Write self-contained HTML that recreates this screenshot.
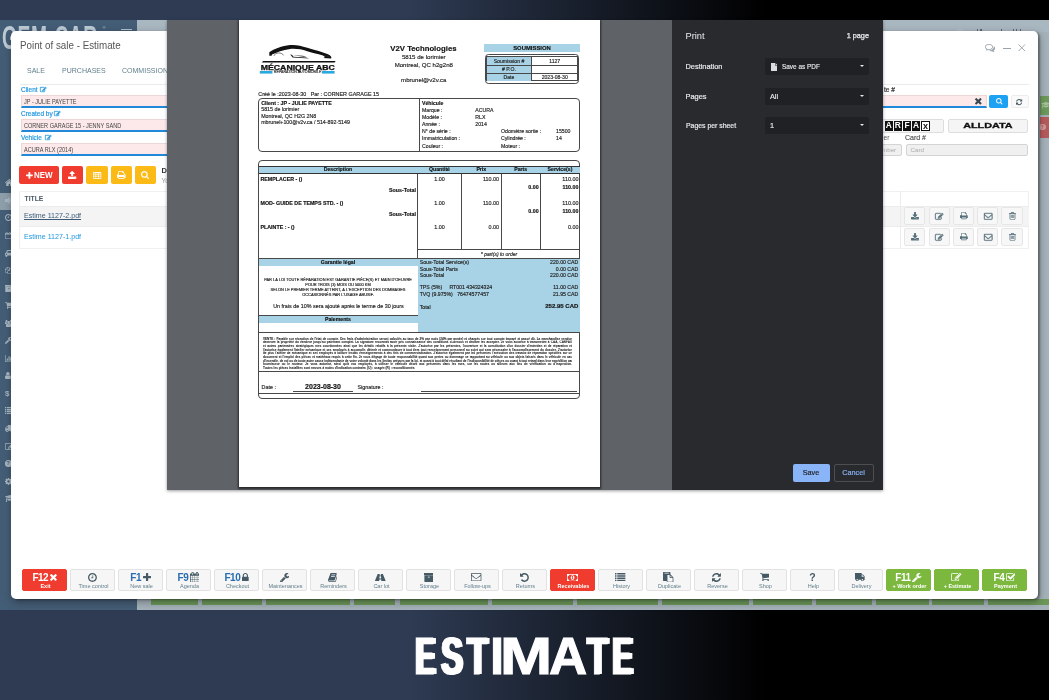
<!DOCTYPE html>
<html><head><meta charset="utf-8"><title>Estimate</title>
<style>
*{box-sizing:border-box;margin:0;padding:0}
html,body{width:1049px;height:700px;overflow:hidden}
body{font-family:"Liberation Sans",sans-serif;background:linear-gradient(90deg,#2e3b53 0,#2e3b53 39%,#000 73%);position:relative;color:#333}
.abs{position:absolute}
.sx{display:inline-block;transform-origin:0 50%;white-space:nowrap}
#app{left:0;top:20px;width:1049px;height:590px;background:#a5b2ba;overflow:hidden;will-change:transform}
#side{left:0;top:0;width:137px;height:590px;background:#445d76}
#modal{left:11px;top:31px;width:1027px;height:568px;background:#fff;border-radius:5px;overflow:hidden;box-shadow:2px 1px 2px rgba(0,0,0,.3),1px 3px 9px rgba(0,0,0,.35);will-change:transform}
#print{left:167px;top:20px;width:716px;height:470px;background:#5f6368;overflow:hidden;will-change:transform;box-shadow:0 1px 3px rgba(0,0,0,.4)}
#ppanel{left:505px;top:0;width:211px;height:470px;background:#292a2d;color:#e8eaed;font-size:7.6px}
#ppanel div{white-space:nowrap}
#page{left:72px;top:0;width:361px;height:467px;background:#fff;box-shadow:0 1px 2px 1px rgba(0,0,0,.6);overflow:hidden}
#title{left:0;top:623px;width:1049px;text-align:center;color:#fff;font-weight:bold;font-size:56px;line-height:64px}
#title{text-align:left;will-change:transform;height:70px}
.tl{position:absolute;transform-origin:0 0;-webkit-text-stroke:1px #fff;color:#fff;font-weight:bold}
.mt{left:8.5px;top:8px;font-size:10.6px;color:#555;white-space:nowrap}
.tab{top:35px;font-size:7.8px;color:#607d8b;white-space:nowrap}
.hl{height:1px;background:#ebebeb}
.lbl{font-size:7.2px;color:#1e96e0;white-space:nowrap;line-height:8px;-webkit-text-stroke:.2px #1e96e0}
.pin{height:12.8px;background:#fde9e9;border:1px solid #ecd6d6;border-bottom:2px solid #2089d9;font-size:6.4px;line-height:11px;color:#444;padding-left:2.8px;white-space:nowrap;overflow:hidden}
.btn{top:135px;height:18.2px;border-radius:2px;color:#fff}
.red{background:#f03c2e}.yel{background:#fbba16}
.gin{height:12.6px;background:#f0f0f0;border:1px solid #d4d4d4;border-radius:2px;font-size:6.2px;line-height:10px;color:#aaa;padding-left:4px}
.lb{height:13.5px;background:#f5f5f5;border:1px solid #ddd;border-radius:2px}
.dl{font-size:6.6px;color:#333;white-space:nowrap;line-height:8px;-webkit-text-stroke:.2px #333}
.row{left:8.5px;width:1009px;height:21.3px}
.ab{width:21.3px;height:18px;background:#f7f7f7;border:1px solid #e6e6e6;border-radius:2px}
.sel{left:93px;width:104px;height:17px;background:#202124;border-radius:2px;line-height:18px;padding-left:5px;font-size:7.3px;color:#e8eaed;-webkit-text-stroke:.15px #e8eaed}
.sel:after{content:"";position:absolute;right:5.2px;top:7px;border:2.6px solid transparent;border-top:2.8px solid #e8eaed;border-bottom:0}
.pl{left:13.5px;line-height:10px;font-size:7.4px;-webkit-text-stroke:.2px #e8eaed}
.bb{top:538.2px;width:45px;height:21.6px;background:#f6f6f6;border:1px solid #e2e2e2;border-radius:2px;overflow:hidden}
.bb .t{position:absolute;left:-5px;width:55px;text-align:center;top:12.7px;font-size:5.5px;line-height:6px;color:#607d8b;white-space:nowrap}
.bb .f{position:absolute;top:1.6px;font-size:9.6px;line-height:11px;font-weight:bold;color:#2a6db0;white-space:nowrap}
.bb.r{background:#f03c2e;border-color:#f03c2e}.bb.g{background:#7cb83e;border-color:#7cb83e}
.bb.r .t,.bb.g .t{color:#fff;font-weight:bold}.bb.r .f,.bb.g .f{color:#fff}
#page div{-webkit-text-stroke:.15px currentColor}

</style></head><body>
<div id="app" class="abs"><div id="side" class="abs"></div><div class="abs" style="left:2.3px;top:-1.8px;font-size:34px;line-height:38px;font-weight:bold;color:#bccad4;white-space:nowrap;letter-spacing:1px"><span class="sx" style="transform:scaleX(.565)">GEM-CAR</span></div><div class="abs" style="left:102.5px;top:4.5px;font-size:4px;line-height:5px;color:#bccad4">®</div><div class="abs" style="left:120.5px;top:8.6px;width:11px;height:1.4px;background:#b3c2cd"></div><div class="abs" style="left:137px;top:0;width:912px;height:12px;background:#a9b7c0"></div><div class="abs" style="left:0;top:173px;width:137px;height:16.5px;background:#8d9eab"></div><svg class="abs" style="left:4.50px;top:159.30px;width:8.79px;height:7.00px" viewBox="26 -1283 1612 1283" preserveAspectRatio="none" overflow="visible"><path transform="scale(1 -1)" fill="#a9b9c5" d="M1408 544C1408 546 1408 548 1407 550L832 1024L257 550C257 548 256 546 256 544V64C256 29 285 0 320 0H704V384H960V0H1344C1379 0 1408 29 1408 64ZM1631 613C1642 626 1640 647 1627 658L1408 840V1248C1408 1266 1394 1280 1376 1280H1184C1166 1280 1152 1266 1152 1248V1053L908 1257C866 1292 798 1292 756 1257L37 658C24 647 22 626 33 613L95 539C100 533 108 529 116 528C125 527 133 530 140 535L832 1112L1524 535C1530 530 1537 528 1545 528C1546 528 1547 528 1548 528C1556 529 1564 533 1569 539L1631 613Z"/></svg><svg class="abs" style="left:4.50px;top:176.85px;width:8.40px;height:7.00px" viewBox="0 -1280 1536 1280" preserveAspectRatio="none" overflow="visible"><path transform="scale(1 -1)" fill="#a9b9c5" d="M1184 640C1184 657 1177 673 1165 685L621 1229C609 1241 593 1248 576 1248C541 1248 512 1219 512 1184V896H64C29 896 0 867 0 832V448C0 413 29 384 64 384H512V96C512 61 541 32 576 32C593 32 609 39 621 51L1165 595C1177 607 1184 623 1184 640ZM1536 992C1536 1151 1407 1280 1248 1280H928C883 1280 896 1212 896 1184C896 1147 935 1152 960 1152H1248C1336 1152 1408 1080 1408 992V288C1408 200 1336 128 1248 128H928C883 128 896 60 896 32C896 15 911 0 928 0H1248C1407 0 1536 129 1536 288Z"/></svg><svg class="abs" style="left:4.50px;top:194.40px;width:7.00px;height:7.00px" viewBox="0 -1408 1536 1536" preserveAspectRatio="none" overflow="visible"><path transform="scale(1 -1)" fill="#a9b9c5" d="M896 992C896 1010 882 1024 864 1024H800C782 1024 768 1010 768 992V640H544C526 640 512 626 512 608V544C512 526 526 512 544 512H864C882 512 896 526 896 544ZM1312 640C1312 340 1068 96 768 96C468 96 224 340 224 640C224 940 468 1184 768 1184C1068 1184 1312 940 1312 640ZM1536 640C1536 1064 1192 1408 768 1408C344 1408 0 1064 0 640C0 216 344 -128 768 -128C1192 -128 1536 216 1536 640Z"/></svg><svg class="abs" style="left:4.50px;top:211.95px;width:6.50px;height:7.00px" viewBox="0 -1536 1664 1792" preserveAspectRatio="none" overflow="visible"><path transform="scale(1 -1)" fill="#a9b9c5" d="M128 -128V896H1536V-128ZM512 1088C512 1070 498 1056 480 1056H416C398 1056 384 1070 384 1088V1376C384 1394 398 1408 416 1408H480C498 1408 512 1394 512 1376V1088ZM1280 1088C1280 1070 1266 1056 1248 1056H1184C1166 1056 1152 1070 1152 1088V1376C1152 1394 1166 1408 1184 1408H1248C1266 1408 1280 1394 1280 1376V1088ZM1664 1152C1664 1222 1606 1280 1536 1280H1408V1376C1408 1464 1336 1536 1248 1536H1184C1096 1536 1024 1464 1024 1376V1280H640V1376C640 1464 568 1536 480 1536H416C328 1536 256 1464 256 1376V1280H128C58 1280 0 1222 0 1152V-128C0 -198 58 -256 128 -256H1536C1606 -256 1664 -198 1664 -128Z"/></svg><svg class="abs" style="left:4.50px;top:229.50px;width:8.96px;height:7.00px" viewBox="0 -1408 2048 1600" preserveAspectRatio="none" overflow="visible"><path transform="scale(1 -1)" fill="#a9b9c5" d="M480 448C480 360 408 288 320 288C232 288 160 360 160 448C160 536 232 608 320 608C408 608 480 536 480 448ZM516 768 605 1125C608 1136 628 1152 640 1152H1408C1420 1152 1440 1136 1443 1125L1532 768ZM1888 448C1888 360 1816 288 1728 288C1640 288 1568 360 1568 448C1568 536 1640 608 1728 608C1816 608 1888 536 1888 448ZM2048 544C2048 668 1948 768 1824 768H1796L1691 1187C1660 1313 1538 1408 1408 1408H640C510 1408 388 1313 357 1187L252 768H224C100 768 0 668 0 544V160C0 142 14 128 32 128H128V0C128 -106 214 -192 320 -192C426 -192 512 -106 512 0V128H1536V0C1536 -106 1622 -192 1728 -192C1834 -192 1920 -106 1920 0V128H2016C2034 128 2048 142 2048 160Z"/></svg><svg class="abs" style="left:4.50px;top:247.05px;width:7.00px;height:7.00px" viewBox="0 -1536 1792 1792" preserveAspectRatio="none" overflow="visible"><path transform="scale(1 -1)" fill="#a9b9c5" d="M1696 1152H1280C1241 1152 1191 1135 1152 1112V1440C1152 1493 1109 1536 1056 1536H640C587 1536 513 1505 476 1468L68 1060C31 1023 0 949 0 896V224C0 171 43 128 96 128H640V-160C640 -213 683 -256 736 -256H1696C1749 -256 1792 -213 1792 -160V1056C1792 1109 1749 1152 1696 1152ZM1152 939V640H853ZM512 1323V1024H213ZM708 676C671 639 640 565 640 512V256H128V896H544C597 896 640 939 640 992V1408H1024V992ZM1664 -128H768V512H1184C1237 512 1280 555 1280 608V1024H1664Z"/></svg><svg class="abs" style="left:4.50px;top:264.60px;width:7.58px;height:7.00px" viewBox="64 -1408 1664 1536" preserveAspectRatio="none" overflow="visible"><path transform="scale(1 -1)" fill="#a9b9c5" d="M1088 704C1088 669 1059 640 1024 640H768C733 640 704 669 704 704C704 739 733 768 768 768H1024C1059 768 1088 739 1088 704ZM1664 896C1664 931 1635 960 1600 960H192C157 960 128 931 128 896V-64C128 -99 157 -128 192 -128H1600C1635 -128 1664 -99 1664 -64ZM1728 1344C1728 1379 1699 1408 1664 1408H128C93 1408 64 1379 64 1344V1088C64 1053 93 1024 128 1024H1664C1699 1024 1728 1053 1728 1088Z"/></svg><svg class="abs" style="left:4.50px;top:282.15px;width:8.27px;height:7.00px" viewBox="0 -1280 1664 1408" preserveAspectRatio="none" overflow="visible"><path transform="scale(1 -1)" fill="#a9b9c5" d="M640 0C640 70 582 128 512 128C442 128 384 70 384 0C384 -70 442 -128 512 -128C582 -128 640 -70 640 0ZM1536 0C1536 70 1478 128 1408 128C1338 128 1280 70 1280 0C1280 -70 1338 -128 1408 -128C1478 -128 1536 -70 1536 0ZM1664 1088C1664 1123 1635 1152 1600 1152H399C389 1200 387 1280 320 1280H64C29 1280 0 1251 0 1216C0 1181 29 1152 64 1152H268L445 329C429 298 384 223 384 192C384 157 413 128 448 128H1472C1507 128 1536 157 1536 192C1536 227 1507 256 1472 256H552C562 276 576 297 576 320C576 344 568 367 563 390L1607 512C1639 516 1664 544 1664 576Z"/></svg><svg class="abs" style="left:4.50px;top:299.70px;width:7.50px;height:7.00px" viewBox="-0 -1536 1920 1792" preserveAspectRatio="none" overflow="visible"><path transform="scale(1 -1)" fill="#a9b9c5" d="M593 640C541 715 512 805 512 896C512 918 514 940 517 962C474 947 430 939 384 939C249 939 145 1024 124 1024C-3 1024 0 752 0 671C0 560 94 512 194 512H328C395 592 489 637 593 640ZM1664 3C1664 229 1611 576 1318 576C1284 576 1160 437 960 437C760 437 636 576 602 576C309 576 256 229 256 3C256 -159 363 -256 523 -256H1397C1557 -256 1664 -159 1664 3ZM640 1280C640 1421 525 1536 384 1536C243 1536 128 1421 128 1280C128 1139 243 1024 384 1024C525 1024 640 1139 640 1280ZM1344 896C1344 1108 1172 1280 960 1280C748 1280 576 1108 576 896C576 684 748 512 960 512C1172 512 1344 684 1344 896ZM1920 671C1920 752 1923 1024 1796 1024C1775 1024 1671 939 1536 939C1490 939 1446 947 1403 962C1406 940 1408 918 1408 896C1408 805 1379 715 1327 640C1431 637 1525 592 1592 512H1726C1826 512 1920 560 1920 671ZM1792 1280C1792 1421 1677 1536 1536 1536C1395 1536 1280 1421 1280 1280C1280 1139 1395 1024 1536 1024C1677 1024 1792 1139 1792 1280Z"/></svg><svg class="abs" style="left:4.50px;top:317.25px;width:6.99px;height:7.00px" viewBox="21 -1408 1641 1643" preserveAspectRatio="none" overflow="visible"><path transform="scale(1 -1)" fill="#a9b9c5" d="M384 64C384 29 355 0 320 0C285 0 256 29 256 64C256 99 285 128 320 128C355 128 384 99 384 64ZM1028 484C897 536 792 641 740 772L59 91C35 67 21 34 21 0C21 -34 35 -67 59 -90L165 -198C189 -221 222 -235 256 -235C290 -235 323 -221 346 -198L1028 484ZM1662 919C1662 939 1650 954 1630 954C1610 954 1378 808 1345 789L1152 896V1120L1445 1289C1454 1295 1461 1306 1461 1317C1461 1329 1455 1338 1445 1345C1384 1386 1289 1408 1216 1408C969 1408 768 1207 768 960C768 713 969 512 1216 512C1405 512 1576 635 1639 813C1650 845 1662 886 1662 919Z"/></svg><svg class="abs" style="left:4.50px;top:334.80px;width:9.33px;height:7.00px" viewBox="0 -1408 2048 1536" preserveAspectRatio="none" overflow="visible"><path transform="scale(1 -1)" fill="#a9b9c5" d="M640 640H384V128H640ZM1024 1152H768V128H1024ZM2048 0H128V1408H0V-128H2048ZM1408 896H1152V128H1408ZM1792 1280H1536V128H1792Z"/></svg><svg class="abs" style="left:4.50px;top:352.35px;width:5.83px;height:7.00px" viewBox="0 -1408 1280 1536" preserveAspectRatio="none" overflow="visible"><path transform="scale(1 -1)" fill="#a9b9c5" d="M1280 137C1280 400 1215 704 953 704C872 625 762 576 640 576C518 576 408 625 327 704C65 704 0 400 0 137C0 -9 96 -128 213 -128H1067C1184 -128 1280 -9 1280 137ZM1024 1024C1024 1236 852 1408 640 1408C428 1408 256 1236 256 1024C256 812 428 640 640 640C852 640 1024 812 1024 1024Z"/></svg><div class="abs" style="left:5px;top:368.9px;font-size:8px;line-height:9px;font-weight:bold;color:#a9b9c5">$</div><svg class="abs" style="left:4.50px;top:387.45px;width:8.91px;height:7.00px" viewBox="0 -1408 1792 1408" preserveAspectRatio="none" overflow="visible"><path transform="scale(1 -1)" fill="#a9b9c5" d="M256 224C256 241 241 256 224 256H32C15 256 0 241 0 224V32C0 15 15 0 32 0H224C241 0 256 15 256 32ZM256 608C256 625 241 640 224 640H32C15 640 0 625 0 608V416C0 399 15 384 32 384H224C241 384 256 399 256 416ZM256 992C256 1009 241 1024 224 1024H32C15 1024 0 1009 0 992V800C0 783 15 768 32 768H224C241 768 256 783 256 800ZM1792 224C1792 241 1777 256 1760 256H416C399 256 384 241 384 224V32C384 15 399 0 416 0H1760C1777 0 1792 15 1792 32ZM256 1376C256 1393 241 1408 224 1408H32C15 1408 0 1393 0 1376V1184C0 1167 15 1152 32 1152H224C241 1152 256 1167 256 1184ZM1792 608C1792 625 1777 640 1760 640H416C399 640 384 625 384 608V416C384 399 399 384 416 384H1760C1777 384 1792 399 1792 416ZM1792 992C1792 1009 1777 1024 1760 1024H416C399 1024 384 1009 384 992V800C384 783 399 768 416 768H1760C1777 768 1792 783 1792 800ZM1792 1376C1792 1393 1777 1408 1760 1408H416C399 1408 384 1393 384 1376V1184C384 1167 399 1152 416 1152H1760C1777 1152 1792 1167 1792 1184Z"/></svg><svg class="abs" style="left:4.50px;top:405.00px;width:8.59px;height:7.00px" viewBox="64 -1280 1728 1408" preserveAspectRatio="none" overflow="visible"><path transform="scale(1 -1)" fill="#a9b9c5" d="M640 128C640 58 582 0 512 0C442 0 384 58 384 128C384 198 442 256 512 256C582 256 640 198 640 128ZM256 640V670C256 674 262 689 265 692L460 887C463 890 478 896 482 896H640V640ZM1536 128C1536 58 1478 0 1408 0C1338 0 1280 58 1280 128C1280 198 1338 256 1408 256C1478 256 1536 198 1536 128ZM1792 1216C1792 1251 1763 1280 1728 1280H704C669 1280 640 1251 640 1216V1024H480C444 1024 396 1004 371 979L173 781C118 726 128 647 128 576V256C93 256 64 227 64 192C64 118 142 128 192 128H256C256 -13 371 -128 512 -128C653 -128 768 -13 768 128H1152C1152 -13 1267 -128 1408 -128C1549 -128 1664 -13 1664 128C1714 128 1792 118 1792 192Z"/></svg><svg class="abs" style="left:4.50px;top:422.55px;width:8.87px;height:7.00px" viewBox="0 -1408 1784 1408" preserveAspectRatio="none" overflow="visible"><path transform="scale(1 -1)" fill="#a9b9c5" d="M888 352H832V448H736V504L852 620L1004 468ZM1328 1072C1337 1063 1336 1048 1327 1039L977 689C968 680 953 679 944 688C935 697 936 712 945 721L1295 1071C1304 1080 1319 1081 1328 1072ZM1408 478C1408 491 1400 502 1388 507C1376 512 1363 510 1353 500L1289 436C1283 430 1280 422 1280 414V288C1280 200 1208 128 1120 128H288C200 128 128 200 128 288V1120C128 1208 200 1280 288 1280H1120C1135 1280 1150 1278 1165 1274C1176 1270 1188 1273 1197 1282L1246 1331C1254 1339 1257 1349 1255 1360C1253 1370 1246 1379 1237 1383C1200 1400 1160 1408 1120 1408H288C129 1408 0 1279 0 1120V288C0 129 129 0 288 0H1120C1279 0 1408 129 1408 288ZM1312 1216 640 544V256H928L1600 928ZM1756 1084C1793 1121 1793 1183 1756 1220L1604 1372C1567 1409 1505 1409 1468 1372L1376 1280L1664 992L1756 1084Z"/></svg><div class="abs" style="left:4.5px;top:440.1px;width:7px;height:7px;border-radius:50%;background:#a9b9c5;color:#445d76;font-size:6px;line-height:7px;font-weight:bold;text-align:center">?</div><svg class="abs" style="left:4.50px;top:457.65px;width:7.00px;height:7.00px" viewBox="0 -1408 1536 1536" preserveAspectRatio="none" overflow="visible"><path transform="scale(1 -1)" fill="#a9b9c5" d="M1024 640C1024 499 909 384 768 384C627 384 512 499 512 640C512 781 627 896 768 896C909 896 1024 781 1024 640ZM1536 749C1536 766 1524 782 1507 785L1324 813C1314 846 1300 879 1283 911C1317 958 1354 1002 1388 1048C1393 1055 1396 1062 1396 1071C1396 1079 1394 1087 1389 1093C1347 1152 1277 1214 1224 1263C1217 1269 1208 1273 1199 1273C1190 1273 1181 1270 1175 1264L1033 1157C1004 1172 974 1184 943 1194L915 1378C913 1395 897 1408 879 1408H657C639 1408 625 1396 621 1380C605 1320 599 1255 592 1194C561 1184 530 1171 501 1156L363 1263C355 1269 346 1273 337 1273C303 1273 168 1127 144 1094C139 1087 135 1080 135 1071C135 1062 139 1054 145 1047C182 1002 218 957 252 909C236 879 223 849 213 817L27 789C12 786 0 768 0 753V531C0 514 12 498 29 495L212 468C222 434 236 401 253 369C219 322 182 278 148 232C143 225 140 218 140 209C140 201 142 193 147 186C189 128 259 66 312 18C319 11 328 7 337 7C346 7 355 10 362 16L503 123C532 108 562 96 593 86L621 -98C623 -115 639 -128 657 -128H879C897 -128 911 -116 915 -100C931 -40 937 25 944 86C975 96 1006 109 1035 124L1173 16C1181 11 1190 7 1199 7C1233 7 1368 154 1392 186C1398 193 1401 200 1401 209C1401 218 1397 227 1391 234C1354 279 1318 323 1284 372C1300 401 1312 431 1323 463L1508 491C1524 494 1536 512 1536 527Z"/></svg><svg class="abs" style="left:4.50px;top:475.20px;width:10.50px;height:7.00px" viewBox="0 -1408 2304 1536" preserveAspectRatio="none" overflow="visible"><path transform="scale(1 -1)" fill="#a9b9c5" d="M1774 700 1200 519C1184 514 1168 512 1152 512C1136 512 1120 514 1104 519L530 700L512 384C504 243 799 128 1152 128C1505 128 1800 243 1792 384ZM2304 1024C2304 1038 2295 1050 2282 1055L1162 1407C1158 1408 1155 1408 1152 1408C1149 1408 1146 1408 1142 1407L22 1055C9 1050 0 1038 0 1024C0 1010 9 998 22 993L355 889C293 802 263 676 257 559C219 537 192 496 192 448C192 403 215 364 250 341L192 -92C191 -101 194 -110 200 -117C206 -124 215 -128 224 -128H416C425 -128 434 -124 440 -117C446 -110 449 -101 448 -92L390 341C425 364 448 403 448 448C448 495 423 535 385 557C393 692 433 802 490 847L1142 641C1146 640 1149 640 1152 640C1155 640 1158 640 1162 641L2282 993C2295 998 2304 1010 2304 1024Z"/></svg><div class="abs" style="left:150.6px;top:578.6px;width:47.7px;height:6.2px;background:#6c9759"></div><div class="abs" style="left:202px;top:578.6px;width:60.3px;height:6.2px;background:#6c9759"></div><div class="abs" style="left:265.8px;top:578.6px;width:83.9px;height:6.2px;background:#6c9759"></div><div class="abs" style="left:353.9px;top:578.6px;width:41.4px;height:6.2px;background:#6c9759"></div><div class="abs" style="left:399.9px;top:578.6px;width:88.1px;height:6.2px;background:#6c9759"></div><div class="abs" style="left:491.8px;top:578.6px;width:80.8px;height:6.2px;background:#6c9759"></div><div class="abs" style="left:576.5px;top:578.6px;width:81.5px;height:6.2px;background:#6c9759"></div><div class="abs" style="left:662px;top:578.6px;width:87.0px;height:6.2px;background:#6c9759"></div><div class="abs" style="left:752.7px;top:578.6px;width:59.3px;height:6.2px;background:#6c9759"></div><div class="abs" style="left:816px;top:578.6px;width:56.0px;height:6.2px;background:#6c9759"></div><div class="abs" style="left:876px;top:578.6px;width:52.5px;height:6.2px;background:#6c9759"></div><div class="abs" style="left:932.3px;top:578.6px;width:51.7px;height:6.2px;background:#6c9759"></div><div class="abs" style="left:987.6px;top:578.6px;width:61.4px;height:6.2px;background:#6c9759"></div><div class="abs" style="left:1040px;top:76px;width:9px;height:19.2px;background:#6d9a5b"></div><div class="abs" style="left:1040px;top:97px;width:9px;height:20.5px;background:#b65b5b"></div><div class="abs" style="left:976.8px;top:8.8px;width:1.4px;height:3px;background:#5a666e"></div><div class="abs" style="left:980.4px;top:8.8px;width:1.4px;height:3px;background:#5a666e"></div><div class="abs" style="left:1001px;top:8.8px;width:1.4px;height:3px;background:#5a666e"></div><div class="abs" style="left:1012.5px;top:8.8px;width:1.4px;height:3px;background:#5a666e"></div><div class="abs" style="left:1016px;top:8.8px;width:1px;height:3px;background:#5a666e"></div><div class="abs" style="left:1019.6px;top:8.8px;width:1.4px;height:3px;background:#5a666e"></div><div class="abs" style="left:956px;top:9px;width:8px;height:8px;border:1.3px solid #b9c5cc;border-radius:50%"></div><svg class="abs" style="left:1040.50px;top:81.50px;width:9.75px;height:6.50px" viewBox="0 -1408 2304 1536" preserveAspectRatio="none" overflow="visible"><path transform="scale(1 -1)" fill="#a9c29c" d="M1774 700 1200 519C1184 514 1168 512 1152 512C1136 512 1120 514 1104 519L530 700L512 384C504 243 799 128 1152 128C1505 128 1800 243 1792 384ZM2304 1024C2304 1038 2295 1050 2282 1055L1162 1407C1158 1408 1155 1408 1152 1408C1149 1408 1146 1408 1142 1407L22 1055C9 1050 0 1038 0 1024C0 1010 9 998 22 993L355 889C293 802 263 676 257 559C219 537 192 496 192 448C192 403 215 364 250 341L192 -92C191 -101 194 -110 200 -117C206 -124 215 -128 224 -128H416C425 -128 434 -124 440 -117C446 -110 449 -101 448 -92L390 341C425 364 448 403 448 448C448 495 423 535 385 557C393 692 433 802 490 847L1142 641C1146 640 1149 640 1152 640C1155 640 1158 640 1162 641L2282 993C2295 998 2304 1010 2304 1024Z"/></svg><div class="abs" style="left:1039px;top:103.5px;width:6.5px;height:6.5px;border-radius:50%;background:#d29c9c;color:#b65b5b;font-size:5.5px;line-height:6.5px;font-weight:bold;text-align:center">?</div></div>
<div id="modal" class="abs">
<div class="abs mt"><span class="sx" style="transform:scaleX(.925)">Point of sale - Estimate</span></div>
<div class="abs tab" style="left:15.8px"><span class="sx" style="transform:scaleX(.9)">SALE</span></div>
<div class="abs tab" style="left:51px"><span class="sx" style="transform:scaleX(.9)">PURCHASES</span></div>
<div class="abs tab" style="left:110.5px"><span class="sx" style="transform:scaleX(.9)">COMMISSIONS</span></div>
<div class="abs hl" style="left:8.5px;top:53px;width:1009px"></div>
<div class="abs lbl" style="left:10px;top:55px"><span class="sx" style="transform:scaleX(.9)">Client</span></div>
<div class="abs pin" style="left:9.5px;top:64.3px;width:966px"><span class="sx" style="transform:scaleX(.87)">JP - JULIE PAYETTE</span></div>
<div class="abs lbl" style="left:10px;top:79px"><span class="sx" style="transform:scaleX(.9)">Created by</span></div>
<div class="abs pin" style="left:9.5px;top:88.3px;width:700px"><span class="sx" style="transform:scaleX(.87)">CORNER GARAGE 15 - JENNY SAND</span></div>
<div class="abs lbl" style="left:10px;top:103px"><span class="sx" style="transform:scaleX(.9)">Vehicle</span></div>
<div class="abs pin" style="left:9.5px;top:112.3px;width:700px"><span class="sx" style="transform:scaleX(.87)">ACURA RLX (2014)</span></div>
<svg class="abs" style="left:28.80px;top:56.00px;width:6.46px;height:5.10px;overflow:visible" viewBox="0 -1408 1784 1408" preserveAspectRatio="none" overflow="visible"><path stroke="#1e96e0" stroke-width="70" transform="scale(1 -1)" fill="#1e96e0" d="M888 352H832V448H736V504L852 620L1004 468ZM1328 1072C1337 1063 1336 1048 1327 1039L977 689C968 680 953 679 944 688C935 697 936 712 945 721L1295 1071C1304 1080 1319 1081 1328 1072ZM1408 478C1408 491 1400 502 1388 507C1376 512 1363 510 1353 500L1289 436C1283 430 1280 422 1280 414V288C1280 200 1208 128 1120 128H288C200 128 128 200 128 288V1120C128 1208 200 1280 288 1280H1120C1135 1280 1150 1278 1165 1274C1176 1270 1188 1273 1197 1282L1246 1331C1254 1339 1257 1349 1255 1360C1253 1370 1246 1379 1237 1383C1200 1400 1160 1408 1120 1408H288C129 1408 0 1279 0 1120V288C0 129 129 0 288 0H1120C1279 0 1408 129 1408 288ZM1312 1216 640 544V256H928L1600 928ZM1756 1084C1793 1121 1793 1183 1756 1220L1604 1372C1567 1409 1505 1409 1468 1372L1376 1280L1664 992L1756 1084Z"/></svg><svg class="abs" style="left:43.20px;top:80.00px;width:6.46px;height:5.10px;overflow:visible" viewBox="0 -1408 1784 1408" preserveAspectRatio="none" overflow="visible"><path stroke="#1e96e0" stroke-width="70" transform="scale(1 -1)" fill="#1e96e0" d="M888 352H832V448H736V504L852 620L1004 468ZM1328 1072C1337 1063 1336 1048 1327 1039L977 689C968 680 953 679 944 688C935 697 936 712 945 721L1295 1071C1304 1080 1319 1081 1328 1072ZM1408 478C1408 491 1400 502 1388 507C1376 512 1363 510 1353 500L1289 436C1283 430 1280 422 1280 414V288C1280 200 1208 128 1120 128H288C200 128 128 200 128 288V1120C128 1208 200 1280 288 1280H1120C1135 1280 1150 1278 1165 1274C1176 1270 1188 1273 1197 1282L1246 1331C1254 1339 1257 1349 1255 1360C1253 1370 1246 1379 1237 1383C1200 1400 1160 1408 1120 1408H288C129 1408 0 1279 0 1120V288C0 129 129 0 288 0H1120C1279 0 1408 129 1408 288ZM1312 1216 640 544V256H928L1600 928ZM1756 1084C1793 1121 1793 1183 1756 1220L1604 1372C1567 1409 1505 1409 1468 1372L1376 1280L1664 992L1756 1084Z"/></svg><svg class="abs" style="left:33.80px;top:104.00px;width:6.46px;height:5.10px;overflow:visible" viewBox="0 -1408 1784 1408" preserveAspectRatio="none" overflow="visible"><path stroke="#1e96e0" stroke-width="70" transform="scale(1 -1)" fill="#1e96e0" d="M888 352H832V448H736V504L852 620L1004 468ZM1328 1072C1337 1063 1336 1048 1327 1039L977 689C968 680 953 679 944 688C935 697 936 712 945 721L1295 1071C1304 1080 1319 1081 1328 1072ZM1408 478C1408 491 1400 502 1388 507C1376 512 1363 510 1353 500L1289 436C1283 430 1280 422 1280 414V288C1280 200 1208 128 1120 128H288C200 128 128 200 128 288V1120C128 1208 200 1280 288 1280H1120C1135 1280 1150 1278 1165 1274C1176 1270 1188 1273 1197 1282L1246 1331C1254 1339 1257 1349 1255 1360C1253 1370 1246 1379 1237 1383C1200 1400 1160 1408 1120 1408H288C129 1408 0 1279 0 1120V288C0 129 129 0 288 0H1120C1279 0 1408 129 1408 288ZM1312 1216 640 544V256H928L1600 928ZM1756 1084C1793 1121 1793 1183 1756 1220L1604 1372C1567 1409 1505 1409 1468 1372L1376 1280L1664 992L1756 1084Z"/></svg>
<div class="abs btn red" style="left:8.4px;width:39.3px"><div class="abs" style="left:14.5px;top:4.3px;font-size:8.6px;line-height:10px;font-weight:bold;color:#fff"><span class="sx" style="transform:scaleX(.93)">NEW</span></div></div>
<div class="abs btn red" style="left:51px;width:21px"></div>
<div class="abs btn yel" style="left:75px;width:21.5px"></div>
<div class="abs btn yel" style="left:99.5px;width:21px"></div>
<div class="abs btn yel" style="left:123.5px;width:21px"></div>
<svg class="abs" style="left:14.60px;top:140.80px;width:6.80px;height:6.80px" viewBox="0 -1408 1408 1408" preserveAspectRatio="none" overflow="visible"><path transform="scale(1 -1)" fill="#fff" d="M1408 800C1408 853 1365 896 1312 896H896V1312C896 1365 853 1408 800 1408H608C555 1408 512 1365 512 1312V896H96C43 896 0 853 0 800V608C0 555 43 512 96 512H512V96C512 43 555 0 608 0H800C853 0 896 43 896 96V512H1312C1365 512 1408 555 1408 608Z"/></svg><svg class="abs" style="left:57.40px;top:140.20px;width:8.32px;height:8.00px" viewBox="0 -1472 1664 1600" preserveAspectRatio="none" overflow="visible"><path transform="scale(1 -1)" fill="#fff" d="M1280 64C1280 29 1251 0 1216 0C1181 0 1152 29 1152 64C1152 99 1181 128 1216 128C1251 128 1280 99 1280 64ZM1536 64C1536 29 1507 0 1472 0C1437 0 1408 29 1408 64C1408 99 1437 128 1472 128C1507 128 1536 99 1536 64ZM1664 288C1664 341 1621 384 1568 384H1141C1114 310 1043 256 960 256H704C621 256 550 310 523 384H96C43 384 0 341 0 288V-32C0 -85 43 -128 96 -128H1568C1621 -128 1664 -85 1664 -32ZM1339 936C1349 959 1344 987 1325 1005L877 1453C865 1466 848 1472 832 1472C816 1472 799 1466 787 1453L339 1005C320 987 315 959 325 936C335 912 358 896 384 896H640V448C640 413 669 384 704 384H960C995 384 1024 413 1024 448V896H1280C1306 896 1329 912 1339 936Z"/></svg><svg class="abs" style="left:81.60px;top:140.80px;width:8.27px;height:7.00px" viewBox="0 -1408 1664 1408" preserveAspectRatio="none" overflow="visible"><path transform="scale(1 -1)" fill="#fff" d="M512 160C512 142 498 128 480 128H160C142 128 128 142 128 160V352C128 370 142 384 160 384H480C498 384 512 370 512 352V160ZM512 544C512 526 498 512 480 512H160C142 512 128 526 128 544V736C128 754 142 768 160 768H480C498 768 512 754 512 736V544ZM1024 160C1024 142 1010 128 992 128H672C654 128 640 142 640 160V352C640 370 654 384 672 384H992C1010 384 1024 370 1024 352V160ZM512 928C512 910 498 896 480 896H160C142 896 128 910 128 928V1120C128 1138 142 1152 160 1152H480C498 1152 512 1138 512 1120V928ZM1024 544C1024 526 1010 512 992 512H672C654 512 640 526 640 544V736C640 754 654 768 672 768H992C1010 768 1024 754 1024 736V544ZM1536 160C1536 142 1522 128 1504 128H1184C1166 128 1152 142 1152 160V352C1152 370 1166 384 1184 384H1504C1522 384 1536 370 1536 352V160ZM1024 928C1024 910 1010 896 992 896H672C654 896 640 910 640 928V1120C640 1138 654 1152 672 1152H992C1010 1152 1024 1138 1024 1120V928ZM1536 544C1536 526 1522 512 1504 512H1184C1166 512 1152 526 1152 544V736C1152 754 1166 768 1184 768H1504C1522 768 1536 754 1536 736V544ZM1536 928C1536 910 1522 896 1504 896H1184C1166 896 1152 910 1152 928V1120C1152 1138 1166 1152 1184 1152H1504C1522 1152 1536 1138 1536 1120V928ZM1664 1248C1664 1336 1592 1408 1504 1408H160C72 1408 0 1336 0 1248V160C0 72 72 0 160 0H1504C1592 0 1664 72 1664 160Z"/></svg><svg class="abs" style="left:105.70px;top:140.20px;width:8.67px;height:8.00px" viewBox="0 -1408 1664 1536" preserveAspectRatio="none" overflow="visible"><path transform="scale(1 -1)" fill="#fff" d="M384 0V256H1280V0ZM384 640V1280H1024V1120C1024 1067 1067 1024 1120 1024H1280V640ZM1536 576C1536 541 1507 512 1472 512C1437 512 1408 541 1408 576C1408 611 1437 640 1472 640C1507 640 1536 611 1536 576ZM1664 576C1664 681 1577 768 1472 768H1408V1024C1408 1077 1378 1150 1340 1188L1188 1340C1150 1378 1077 1408 1024 1408H352C299 1408 256 1365 256 1312V768H192C87 768 0 681 0 576V160C0 143 15 128 32 128H256V-32C256 -85 299 -128 352 -128H1312C1365 -128 1408 -85 1408 -32V128H1632C1649 128 1664 143 1664 160Z"/></svg><svg class="abs" style="left:130.00px;top:140.20px;width:8.00px;height:8.00px" viewBox="0 -1408 1664 1664" preserveAspectRatio="none" overflow="visible"><path transform="scale(1 -1)" fill="#fff" d="M1152 704C1152 457 951 256 704 256C457 256 256 457 256 704C256 951 457 1152 704 1152C951 1152 1152 951 1152 704ZM1664 -128C1664 -94 1650 -61 1627 -38L1284 305C1365 422 1408 562 1408 704C1408 1093 1093 1408 704 1408C315 1408 0 1093 0 704C0 315 315 0 704 0C846 0 986 43 1103 124L1446 -218C1469 -242 1502 -256 1536 -256C1606 -256 1664 -198 1664 -128Z"/></svg>
<div class="abs" style="left:150.5px;top:135.2px;font-size:7.5px;font-weight:bold;color:#333;line-height:9px">Documents</div>
<div class="abs" style="left:150.5px;top:145.6px;font-size:6.5px;color:#999;line-height:8px">You can</div>
<!-- top-right window controls -->
<svg class="abs" style="left:974.00px;top:13.20px;width:10.18px;height:8.00px" viewBox="0 -1280 1792 1408" preserveAspectRatio="none" overflow="visible"><path transform="scale(1 -1)" fill="#9aa4aa" d="M704 1152C1016 1152 1280 976 1280 768C1280 560 1016 384 704 384C652 384 601 389 551 398L498 408L454 377C434 363 413 350 392 338L427 422L330 478C202 552 128 658 128 768C128 976 392 1152 704 1152ZM704 1280C315 1280 0 1051 0 768C0 606 104 461 266 367C232 284 188 245 149 201C138 188 125 176 129 157C129 157 129 157 129 157C132 140 146 128 161 128C162 128 163 128 164 128C194 132 223 137 250 144C351 170 445 213 528 272C584 262 643 256 704 256C1093 256 1408 485 1408 768C1408 1051 1093 1280 704 1280ZM1526 111C1688 205 1792 349 1792 512C1792 679 1682 827 1513 920C1528 871 1536 820 1536 768C1536 589 1444 424 1277 302C1122 190 919 128 704 128C675 128 645 130 616 132C741 50 907 0 1088 0C1149 0 1208 6 1264 16C1347 -43 1441 -86 1542 -112C1569 -119 1598 -124 1628 -128C1644 -130 1659 -117 1663 -99C1663 -99 1663 -99 1663 -99C1667 -80 1654 -68 1643 -55C1604 -11 1560 28 1526 111Z"/></svg>
<div class="abs" style="left:991.5px;top:16.8px;width:8px;height:1px;background:#99a2a8"></div>
<svg class="abs" style="left:1007.3px;top:13.3px;width:7.6px;height:7.6px" viewBox="0 0 10 10"><path d="M.7 .7L9.3 9.3M9.3 .7L.7 9.3" stroke="#99a2a8" stroke-width="1.2" fill="none"/></svg>
<!-- right side -->
<div class="abs dl" style="left:873px;top:55px">te #</div>
<div class="abs" style="left:978.3px;top:64px;width:19.2px;height:13px;background:#1da1f2;border-radius:2px"></div>
<div class="abs" style="left:999.5px;top:64px;width:18px;height:13px;background:#fafafa;border:1px solid #ececec;border-radius:2px"></div>
<svg class="abs" style="left:964.00px;top:67.30px;width:6.60px;height:6.60px" viewBox="110 -1170 1188 1188" preserveAspectRatio="none" overflow="visible"><path transform="scale(1 -1)" fill="#37474f" d="M1298 214C1298 239 1288 264 1270 282L976 576L1270 870C1288 888 1298 913 1298 938C1298 963 1288 988 1270 1006L1134 1142C1116 1160 1091 1170 1066 1170C1041 1170 1016 1160 998 1142L704 848L410 1142C392 1160 367 1170 342 1170C317 1170 292 1160 274 1142L138 1006C120 988 110 963 110 938C110 913 120 888 138 870L432 576L138 282C120 264 110 239 110 214C110 189 120 164 138 146L274 10C292 -8 317 -18 342 -18C367 -18 392 -8 410 10L704 304L998 10C1016 -8 1041 -18 1066 -18C1091 -18 1116 -8 1134 10L1270 146C1288 164 1298 189 1298 214Z"/></svg><svg class="abs" style="left:984.60px;top:67.40px;width:6.60px;height:6.60px" viewBox="0 -1408 1664 1664" preserveAspectRatio="none" overflow="visible"><path transform="scale(1 -1)" fill="#fff" d="M1152 704C1152 457 951 256 704 256C457 256 256 457 256 704C256 951 457 1152 704 1152C951 1152 1152 951 1152 704ZM1664 -128C1664 -94 1650 -61 1627 -38L1284 305C1365 422 1408 562 1408 704C1408 1093 1093 1408 704 1408C315 1408 0 1093 0 704C0 315 315 0 704 0C846 0 986 43 1103 124L1446 -218C1469 -242 1502 -256 1536 -256C1606 -256 1664 -198 1664 -128Z"/></svg><svg class="abs" style="left:1005.30px;top:67.60px;width:6.20px;height:6.20px" viewBox="0 -1408 1536 1536" preserveAspectRatio="none" overflow="visible"><path transform="scale(1 -1)" fill="#455a64" d="M1511 480C1511 497 1497 512 1479 512H1287C1272 512 1262 503 1257 489C1240 449 1228 411 1204 372C1111 220 946 128 768 128C639 128 514 178 420 266L557 403C569 415 576 431 576 448C576 483 547 512 512 512H64C29 512 0 483 0 448V0C0 -35 29 -64 64 -64C81 -64 97 -57 109 -45L238 84C380 -51 569 -128 764 -128C1133 -128 1425 119 1510 473C1511 475 1511 478 1511 480ZM1536 1280C1536 1315 1507 1344 1472 1344C1455 1344 1439 1337 1427 1325L1297 1196C1155 1330 964 1408 768 1408C399 1408 104 1162 18 807C18 805 18 802 18 800C18 783 32 768 50 768H249C264 768 274 777 279 791C296 831 308 869 332 908C425 1060 590 1152 768 1152C897 1152 1022 1103 1117 1015L979 877C967 865 960 849 960 832C960 797 989 768 1024 768H1472C1507 768 1536 797 1536 832Z"/></svg>
<div class="abs lb" style="left:860px;top:88.3px;width:72.8px"></div>
<div class="abs lb" style="left:936.5px;top:88.3px;width:80.5px"><div class="abs" style="left:0;top:1px;width:100%;text-align:center;font-size:7.4px;line-height:10.5px;font-weight:bold;color:#111;-webkit-text-stroke:.3px #111"><span style="display:inline-block;transform:scaleX(1.46)">ALLDATA</span></div></div>
<div class="abs" style="left:864.70px;top:90.4px;width:7.7px;height:9.2px;background:#111;color:#fff;font-size:8.4px;line-height:9.2px;font-weight:bold;text-align:center">C</div>
<div class="abs" style="left:873.85px;top:90.4px;width:7.7px;height:9.2px;background:#111;color:#fff;font-size:8.4px;line-height:9.2px;font-weight:bold;text-align:center">A</div>
<div class="abs" style="left:883.00px;top:90.4px;width:7.7px;height:9.2px;background:#111;color:#fff;font-size:8.4px;line-height:9.2px;font-weight:bold;text-align:center">R</div>
<div class="abs" style="left:892.15px;top:90.4px;width:7.7px;height:9.2px;background:#111;color:#fff;font-size:8.4px;line-height:9.2px;font-weight:bold;text-align:center">F</div>
<div class="abs" style="left:901.30px;top:90.4px;width:7.7px;height:9.2px;background:#111;color:#fff;font-size:8.4px;line-height:9.2px;font-weight:bold;text-align:center">A</div>
<div class="abs" style="left:910.4px;top:90.4px;width:8.2px;height:9.6px;background:#fff;border:.8px solid #111;color:#111;font-size:9px;line-height:8.6px;font-weight:bold;text-align:center">x</div>
<div class="abs dl" style="left:872.5px;top:102.8px;color:#555;-webkit-text-stroke:0">er</div>
<div class="abs dl" style="left:894px;top:102.8px;color:#444;font-size:7px;-webkit-text-stroke:.1px #444">Card #</div>
<div class="abs gin" style="left:840px;top:112.5px;width:51.2px;text-align:right;padding-right:5px">Number</div>
<div class="abs gin" style="left:894.5px;top:112.5px;width:122.3px">Card</div>
<!-- table -->
<div class="abs" style="left:8px;top:160px;width:1010px;height:58px;border:1px solid #f0f0f0"></div>
<div class="abs row" style="top:174.5px;background:#f4f4f4;border-top:1px solid #ececec;border-bottom:1px solid #ececec"></div>
<div class="abs" style="left:888.5px;top:160px;width:1px;height:57px;background:#ececec"></div>
<div class="abs" style="left:13.5px;top:163.5px;font-size:6.8px;font-weight:bold;color:#4a5a66;line-height:8px">TITLE</div>
<div class="abs" style="left:13px;top:181px;font-size:7.1px;color:#3c5a78;text-decoration:underline;text-decoration-thickness:.6px;line-height:9px;white-space:nowrap">Estime 1127-2.pdf</div>
<div class="abs" style="left:13px;top:202.2px;font-size:7.1px;color:#1e96e0;line-height:9px;white-space:nowrap">Estime 1127-1.pdf</div>
<div class="abs ab" style="left:893.2px;top:175.8px"></div>
<svg class="abs" style="left:899.84px;top:181.10px;width:8.02px;height:7.40px" viewBox="0 -1536 1664 1536" preserveAspectRatio="none" overflow="visible"><path transform="scale(1 -1)" fill="#546e7a" d="M1280 192C1280 157 1251 128 1216 128C1181 128 1152 157 1152 192C1152 227 1181 256 1216 256C1251 256 1280 227 1280 192ZM1536 192C1536 157 1507 128 1472 128C1437 128 1408 157 1408 192C1408 227 1437 256 1472 256C1507 256 1536 227 1536 192ZM1664 416C1664 469 1621 512 1568 512H1104L968 376C931 340 883 320 832 320C781 320 733 340 696 376L561 512H96C43 512 0 469 0 416V96C0 43 43 0 96 0H1568C1621 0 1664 43 1664 96ZM1339 985C1329 1008 1306 1024 1280 1024H1024V1472C1024 1507 995 1536 960 1536H704C669 1536 640 1507 640 1472V1024H384C358 1024 335 1008 325 985C315 961 320 933 339 915L787 467C799 454 816 448 832 448C848 448 865 454 877 467L1325 915C1344 933 1349 961 1339 985Z"/></svg><div class="abs ab" style="left:917.5px;top:175.8px"></div>
<svg class="abs" style="left:923.97px;top:181.50px;width:8.36px;height:6.60px" viewBox="0 -1408 1784 1408" preserveAspectRatio="none" overflow="visible"><path transform="scale(1 -1)" fill="#546e7a" stroke="#546e7a" stroke-width="70" d="M888 352H832V448H736V504L852 620L1004 468ZM1328 1072C1337 1063 1336 1048 1327 1039L977 689C968 680 953 679 944 688C935 697 936 712 945 721L1295 1071C1304 1080 1319 1081 1328 1072ZM1408 478C1408 491 1400 502 1388 507C1376 512 1363 510 1353 500L1289 436C1283 430 1280 422 1280 414V288C1280 200 1208 128 1120 128H288C200 128 128 200 128 288V1120C128 1208 200 1280 288 1280H1120C1135 1280 1150 1278 1165 1274C1176 1270 1188 1273 1197 1282L1246 1331C1254 1339 1257 1349 1255 1360C1253 1370 1246 1379 1237 1383C1200 1400 1160 1408 1120 1408H288C129 1408 0 1279 0 1120V288C0 129 129 0 288 0H1120C1279 0 1408 129 1408 288ZM1312 1216 640 544V256H928L1600 928ZM1756 1084C1793 1121 1793 1183 1756 1220L1604 1372C1567 1409 1505 1409 1468 1372L1376 1280L1664 992L1756 1084Z"/></svg><div class="abs ab" style="left:941.8px;top:175.8px"></div>
<svg class="abs" style="left:948.55px;top:181.20px;width:7.80px;height:7.20px" viewBox="0 -1408 1664 1536" preserveAspectRatio="none" overflow="visible"><path transform="scale(1 -1)" fill="#546e7a" d="M384 0V256H1280V0ZM384 640V1280H1024V1120C1024 1067 1067 1024 1120 1024H1280V640ZM1536 576C1536 541 1507 512 1472 512C1437 512 1408 541 1408 576C1408 611 1437 640 1472 640C1507 640 1536 611 1536 576ZM1664 576C1664 681 1577 768 1472 768H1408V1024C1408 1077 1378 1150 1340 1188L1188 1340C1150 1378 1077 1408 1024 1408H352C299 1408 256 1365 256 1312V768H192C87 768 0 681 0 576V160C0 143 15 128 32 128H256V-32C256 -85 299 -128 352 -128H1312C1365 -128 1408 -85 1408 -32V128H1632C1649 128 1664 143 1664 160Z"/></svg><div class="abs ab" style="left:966.1px;top:175.8px"></div>
<svg class="abs" style="left:972.55px;top:181.50px;width:8.40px;height:6.60px" viewBox="0 -1280 1792 1408" preserveAspectRatio="none" overflow="visible"><path transform="scale(1 -1)" fill="#546e7a" stroke="#546e7a" stroke-width="80" d="M1664 32C1664 15 1649 0 1632 0H160C143 0 128 15 128 32V800C149 776 172 754 197 734C340 624 484 512 623 396C698 333 791 256 895 256H896H897C1001 256 1094 333 1169 396C1308 512 1452 624 1595 734C1620 754 1643 776 1664 800V32ZM1664 1083C1664 998 1582 887 1517 836C1383 731 1249 625 1116 519C1063 476 967 384 897 384H896H895C825 384 729 476 676 519C543 625 409 731 275 836C185 907 128 1006 128 1120C128 1137 143 1152 160 1152H1632C1670 1152 1664 1108 1664 1083ZM1792 1120C1792 1208 1720 1280 1632 1280H160C72 1280 0 1208 0 1120V32C0 -56 72 -128 160 -128H1632C1720 -128 1792 -56 1792 32Z"/></svg><div class="abs ab" style="left:990.4px;top:175.8px"></div>
<svg class="abs" style="left:997.57px;top:181.00px;width:6.97px;height:7.60px" viewBox="0 -1408 1408 1536" preserveAspectRatio="none" overflow="visible"><path transform="scale(1 -1)" fill="#546e7a" stroke="#546e7a" stroke-width="15" d="M512 800C512 818 498 832 480 832H416C398 832 384 818 384 800V224C384 206 398 192 416 192H480C498 192 512 206 512 224ZM768 800C768 818 754 832 736 832H672C654 832 640 818 640 800V224C640 206 654 192 672 192H736C754 192 768 206 768 224ZM1024 800C1024 818 1010 832 992 832H928C910 832 896 818 896 800V224C896 206 910 192 928 192H992C1010 192 1024 206 1024 224ZM1152 76C1152 28 1125 0 1120 0H288C283 0 256 28 256 76V1024H1152V76ZM480 1152 529 1269C532 1273 540 1279 546 1280H863C868 1279 877 1273 880 1269L928 1152ZM1408 1120C1408 1138 1394 1152 1376 1152H1067L997 1319C977 1368 917 1408 864 1408H544C491 1408 431 1368 411 1319L341 1152H32C14 1152 0 1138 0 1120V1056C0 1038 14 1024 32 1024H128V72C128 -38 200 -128 288 -128H1120C1208 -128 1280 -34 1280 76V1024H1376C1394 1024 1408 1038 1408 1056Z"/></svg><div class="abs ab" style="left:893.2px;top:196.9px"></div>
<svg class="abs" style="left:899.84px;top:202.20px;width:8.02px;height:7.40px" viewBox="0 -1536 1664 1536" preserveAspectRatio="none" overflow="visible"><path transform="scale(1 -1)" fill="#546e7a" d="M1280 192C1280 157 1251 128 1216 128C1181 128 1152 157 1152 192C1152 227 1181 256 1216 256C1251 256 1280 227 1280 192ZM1536 192C1536 157 1507 128 1472 128C1437 128 1408 157 1408 192C1408 227 1437 256 1472 256C1507 256 1536 227 1536 192ZM1664 416C1664 469 1621 512 1568 512H1104L968 376C931 340 883 320 832 320C781 320 733 340 696 376L561 512H96C43 512 0 469 0 416V96C0 43 43 0 96 0H1568C1621 0 1664 43 1664 96ZM1339 985C1329 1008 1306 1024 1280 1024H1024V1472C1024 1507 995 1536 960 1536H704C669 1536 640 1507 640 1472V1024H384C358 1024 335 1008 325 985C315 961 320 933 339 915L787 467C799 454 816 448 832 448C848 448 865 454 877 467L1325 915C1344 933 1349 961 1339 985Z"/></svg><div class="abs ab" style="left:917.5px;top:196.9px"></div>
<svg class="abs" style="left:923.97px;top:202.60px;width:8.36px;height:6.60px" viewBox="0 -1408 1784 1408" preserveAspectRatio="none" overflow="visible"><path transform="scale(1 -1)" fill="#546e7a" stroke="#546e7a" stroke-width="70" d="M888 352H832V448H736V504L852 620L1004 468ZM1328 1072C1337 1063 1336 1048 1327 1039L977 689C968 680 953 679 944 688C935 697 936 712 945 721L1295 1071C1304 1080 1319 1081 1328 1072ZM1408 478C1408 491 1400 502 1388 507C1376 512 1363 510 1353 500L1289 436C1283 430 1280 422 1280 414V288C1280 200 1208 128 1120 128H288C200 128 128 200 128 288V1120C128 1208 200 1280 288 1280H1120C1135 1280 1150 1278 1165 1274C1176 1270 1188 1273 1197 1282L1246 1331C1254 1339 1257 1349 1255 1360C1253 1370 1246 1379 1237 1383C1200 1400 1160 1408 1120 1408H288C129 1408 0 1279 0 1120V288C0 129 129 0 288 0H1120C1279 0 1408 129 1408 288ZM1312 1216 640 544V256H928L1600 928ZM1756 1084C1793 1121 1793 1183 1756 1220L1604 1372C1567 1409 1505 1409 1468 1372L1376 1280L1664 992L1756 1084Z"/></svg><div class="abs ab" style="left:941.8px;top:196.9px"></div>
<svg class="abs" style="left:948.55px;top:202.30px;width:7.80px;height:7.20px" viewBox="0 -1408 1664 1536" preserveAspectRatio="none" overflow="visible"><path transform="scale(1 -1)" fill="#546e7a" d="M384 0V256H1280V0ZM384 640V1280H1024V1120C1024 1067 1067 1024 1120 1024H1280V640ZM1536 576C1536 541 1507 512 1472 512C1437 512 1408 541 1408 576C1408 611 1437 640 1472 640C1507 640 1536 611 1536 576ZM1664 576C1664 681 1577 768 1472 768H1408V1024C1408 1077 1378 1150 1340 1188L1188 1340C1150 1378 1077 1408 1024 1408H352C299 1408 256 1365 256 1312V768H192C87 768 0 681 0 576V160C0 143 15 128 32 128H256V-32C256 -85 299 -128 352 -128H1312C1365 -128 1408 -85 1408 -32V128H1632C1649 128 1664 143 1664 160Z"/></svg><div class="abs ab" style="left:966.1px;top:196.9px"></div>
<svg class="abs" style="left:972.55px;top:202.60px;width:8.40px;height:6.60px" viewBox="0 -1280 1792 1408" preserveAspectRatio="none" overflow="visible"><path transform="scale(1 -1)" fill="#546e7a" stroke="#546e7a" stroke-width="80" d="M1664 32C1664 15 1649 0 1632 0H160C143 0 128 15 128 32V800C149 776 172 754 197 734C340 624 484 512 623 396C698 333 791 256 895 256H896H897C1001 256 1094 333 1169 396C1308 512 1452 624 1595 734C1620 754 1643 776 1664 800V32ZM1664 1083C1664 998 1582 887 1517 836C1383 731 1249 625 1116 519C1063 476 967 384 897 384H896H895C825 384 729 476 676 519C543 625 409 731 275 836C185 907 128 1006 128 1120C128 1137 143 1152 160 1152H1632C1670 1152 1664 1108 1664 1083ZM1792 1120C1792 1208 1720 1280 1632 1280H160C72 1280 0 1208 0 1120V32C0 -56 72 -128 160 -128H1632C1720 -128 1792 -56 1792 32Z"/></svg><div class="abs ab" style="left:990.4px;top:196.9px"></div>
<svg class="abs" style="left:997.57px;top:202.10px;width:6.97px;height:7.60px" viewBox="0 -1408 1408 1536" preserveAspectRatio="none" overflow="visible"><path transform="scale(1 -1)" fill="#546e7a" stroke="#546e7a" stroke-width="15" d="M512 800C512 818 498 832 480 832H416C398 832 384 818 384 800V224C384 206 398 192 416 192H480C498 192 512 206 512 224ZM768 800C768 818 754 832 736 832H672C654 832 640 818 640 800V224C640 206 654 192 672 192H736C754 192 768 206 768 224ZM1024 800C1024 818 1010 832 992 832H928C910 832 896 818 896 800V224C896 206 910 192 928 192H992C1010 192 1024 206 1024 224ZM1152 76C1152 28 1125 0 1120 0H288C283 0 256 28 256 76V1024H1152V76ZM480 1152 529 1269C532 1273 540 1279 546 1280H863C868 1279 877 1273 880 1269L928 1152ZM1408 1120C1408 1138 1394 1152 1376 1152H1067L997 1319C977 1368 917 1408 864 1408H544C491 1408 431 1368 411 1319L341 1152H32C14 1152 0 1138 0 1120V1056C0 1038 14 1024 32 1024H128V72C128 -38 200 -128 288 -128H1120C1208 -128 1280 -34 1280 76V1024H1376C1394 1024 1408 1038 1408 1056Z"/></svg><div class="abs bb r" style="left:11px"><div style="position:absolute;left:0;top:1.6px;width:100%;height:11px;display:flex;justify-content:center;align-items:center;gap:1.6px"><span style="font-size:10px;line-height:11px;font-weight:bold;letter-spacing:-.5px;color:#fff">F12</span><svg style="width:6.89px;height:6.89px;flex:none;" viewBox="110 -1170 1188 1188"><path transform="scale(1 -1)" fill="#fff" d="M1298 214C1298 239 1288 264 1270 282L976 576L1270 870C1288 888 1298 913 1298 938C1298 963 1288 988 1270 1006L1134 1142C1116 1160 1091 1170 1066 1170C1041 1170 1016 1160 998 1142L704 848L410 1142C392 1160 367 1170 342 1170C317 1170 292 1160 274 1142L138 1006C120 988 110 963 110 938C110 913 120 888 138 870L432 576L138 282C120 264 110 239 110 214C110 189 120 164 138 146L274 10C292 -8 317 -18 342 -18C367 -18 392 -8 410 10L704 304L998 10C1016 -8 1041 -18 1066 -18C1091 -18 1116 -8 1134 10L1270 146C1288 164 1298 189 1298 214Z"/></svg></div><div class="t">Exit</div></div>
<div class="abs bb " style="left:59px"><div style="position:absolute;left:0;top:1.6px;width:100%;height:11px;display:flex;justify-content:center;align-items:center;gap:1.6px"><svg style="width:8.91px;height:8.91px;flex:none;" viewBox="0 -1408 1536 1536"><path transform="scale(1 -1)" fill="#455a64" d="M896 992C896 1010 882 1024 864 1024H800C782 1024 768 1010 768 992V640H544C526 640 512 626 512 608V544C512 526 526 512 544 512H864C882 512 896 526 896 544ZM1312 640C1312 340 1068 96 768 96C468 96 224 340 224 640C224 940 468 1184 768 1184C1068 1184 1312 940 1312 640ZM1536 640C1536 1064 1192 1408 768 1408C344 1408 0 1064 0 640C0 216 344 -128 768 -128C1192 -128 1536 216 1536 640Z"/></svg></div><div class="t">Time control</div></div>
<div class="abs bb " style="left:107px"><div style="position:absolute;left:0;top:1.6px;width:100%;height:11px;display:flex;justify-content:center;align-items:center;gap:1.6px"><span style="font-size:10px;line-height:11px;font-weight:bold;letter-spacing:-.5px;color:#2a6db0">F1</span><svg style="width:8.17px;height:8.17px;flex:none;" viewBox="0 -1408 1408 1408"><path transform="scale(1 -1)" fill="#455a64" d="M1408 800C1408 853 1365 896 1312 896H896V1312C896 1365 853 1408 800 1408H608C555 1408 512 1365 512 1312V896H96C43 896 0 853 0 800V608C0 555 43 512 96 512H512V96C512 43 555 0 608 0H800C853 0 896 43 896 96V512H1312C1365 512 1408 555 1408 608Z"/></svg></div><div class="t">New sale</div></div>
<div class="abs bb " style="left:155px"><div style="position:absolute;left:0;top:1.6px;width:100%;height:11px;display:flex;justify-content:center;align-items:center;gap:1.6px"><span style="font-size:10px;line-height:11px;font-weight:bold;letter-spacing:-.5px;color:#2a6db0">F9</span><svg style="width:9.66px;height:10.40px;flex:none;" viewBox="0 -1536 1664 1792"><path transform="scale(1 -1)" fill="#455a64" d="M128 -128V160H416V-128ZM480 -128V160H800V-128ZM128 224V544H416V224ZM480 224V544H800V224ZM128 608V896H416V608ZM864 -128V160H1184V-128ZM480 608V896H800V608ZM1248 -128V160H1536V-128ZM864 224V544H1184V224ZM512 1088C512 1071 497 1056 480 1056H416C399 1056 384 1071 384 1088V1376C384 1393 399 1408 416 1408H480C497 1408 512 1393 512 1376V1088ZM1248 224V544H1536V224ZM864 608V896H1184V608ZM1248 608V896H1536V608ZM1280 1088C1280 1071 1265 1056 1248 1056H1184C1167 1056 1152 1071 1152 1088V1376C1152 1393 1167 1408 1184 1408H1248C1265 1408 1280 1393 1280 1376V1088ZM1664 1152C1664 1222 1606 1280 1536 1280H1408V1376C1408 1464 1336 1536 1248 1536H1184C1096 1536 1024 1464 1024 1376V1280H640V1376C640 1464 568 1536 480 1536H416C328 1536 256 1464 256 1376V1280H128C58 1280 0 1222 0 1152V-128C0 -198 58 -256 128 -256H1536C1606 -256 1664 -198 1664 -128Z"/></svg></div><div class="t">Agenda</div></div>
<div class="abs bb " style="left:203px"><div style="position:absolute;left:0;top:1.6px;width:100%;height:11px;display:flex;justify-content:center;align-items:center;gap:1.6px"><span style="font-size:10px;line-height:11px;font-weight:bold;letter-spacing:-.5px;color:#2a6db0">F10</span><svg style="width:6.69px;height:8.17px;flex:none;" viewBox="0 -1408 1152 1408"><path transform="scale(1 -1)" fill="#455a64" d="M320 768V960C320 1101 435 1216 576 1216C717 1216 832 1101 832 960V768ZM1152 672C1152 725 1109 768 1056 768H1024V960C1024 1206 822 1408 576 1408C330 1408 128 1206 128 960V768H96C43 768 0 725 0 672V96C0 43 43 0 96 0H1056C1109 0 1152 43 1152 96Z"/></svg></div><div class="t">Checkout</div></div>
<div class="abs bb " style="left:251px"><div style="position:absolute;left:0;top:1.6px;width:100%;height:11px;display:flex;justify-content:center;align-items:center;gap:1.6px"><svg style="width:9.52px;height:9.54px;flex:none;" viewBox="21 -1408 1641 1643"><path transform="scale(1 -1)" fill="#455a64" d="M384 64C384 29 355 0 320 0C285 0 256 29 256 64C256 99 285 128 320 128C355 128 384 99 384 64ZM1028 484C897 536 792 641 740 772L59 91C35 67 21 34 21 0C21 -34 35 -67 59 -90L165 -198C189 -221 222 -235 256 -235C290 -235 323 -221 346 -198L1028 484ZM1662 919C1662 939 1650 954 1630 954C1610 954 1378 808 1345 789L1152 896V1120L1445 1289C1454 1295 1461 1306 1461 1317C1461 1329 1455 1338 1445 1345C1384 1386 1289 1408 1216 1408C969 1408 768 1207 768 960C768 713 969 512 1216 512C1405 512 1576 635 1639 813C1650 845 1662 886 1662 919Z"/></svg></div><div class="t">Maintenances</div></div>
<div class="abs bb " style="left:299px"><div style="position:absolute;left:0;top:1.6px;width:100%;height:11px;display:flex;justify-content:center;align-items:center;gap:1.6px"><svg style="width:9.66px;height:8.91px;flex:none;" viewBox="-0 -1408 1664 1536"><path transform="scale(1 -1)" fill="#455a64" d="M1639 1058C1624 1078 1603 1092 1580 1101C1581 1083 1581 1063 1575 1044L1275 57C1264 21 1221 0 1184 0H261C206 0 137 12 117 70C109 92 110 101 118 113C127 125 143 128 156 128H1025C1152 128 1178 162 1225 316L1499 1222C1513 1269 1507 1316 1481 1352C1456 1387 1414 1408 1367 1408H606C589 1408 572 1403 555 1399L556 1402C429 1438 421 1301 379 1239C363 1216 339 1196 335 1177C332 1159 342 1142 340 1125C334 1072 294 977 270 944C255 924 233 914 226 891C220 875 230 852 228 831C223 784 188 695 161 649C151 631 132 617 127 598C122 581 132 559 127 540C116 488 82 407 52 357C36 330 15 313 11 289C9 277 18 264 17 248C16 224 12 204 10 184C-4 146 -4 102 12 57C49 -47 158 -128 260 -128H1183C1269 -128 1357 -62 1382 23L1657 929C1671 975 1664 1022 1639 1058ZM575 1056 596 1120C602 1138 621 1152 638 1152H1246C1264 1152 1274 1138 1268 1120L1247 1056C1241 1038 1222 1024 1205 1024H597C579 1024 569 1038 575 1056ZM492 800 513 864C519 882 538 896 555 896H1163C1181 896 1191 882 1185 864L1164 800C1158 782 1139 768 1122 768H514C496 768 486 782 492 800Z"/></svg></div><div class="t">Reminders</div></div>
<div class="abs bb " style="left:347px"><div style="position:absolute;left:0;top:1.6px;width:100%;height:11px;display:flex;justify-content:center;align-items:center;gap:1.6px"><svg style="width:10.56px;height:7.43px;flex:none;" viewBox="50 -1280 1820 1280"><path transform="scale(1 -1)" fill="#455a64" d="M1111 540C1112 524 1097 512 1082 512H838C823 512 808 524 809 540V544L833 864C834 882 850 896 867 896H1053C1070 896 1086 882 1087 864L1111 544V540ZM1870 73C1870 113 1859 153 1844 189L1427 1233C1417 1258 1390 1280 1363 1280H1024C1041 1280 1057 1266 1058 1248L1073 1056C1074 1038 1061 1024 1043 1024H877C859 1024 846 1038 847 1056L862 1248C863 1266 879 1280 896 1280H557C530 1280 503 1258 493 1233L76 189C61 153 50 113 50 73C50 44 58 0 96 0H800C783 0 769 14 770 32L790 288C791 306 807 320 824 320H1096C1113 320 1129 306 1130 288L1150 32C1151 14 1137 0 1120 0H1824C1862 0 1870 44 1870 73Z"/></svg></div><div class="t">Car lot</div></div>
<div class="abs bb " style="left:395px"><div style="position:absolute;left:0;top:1.6px;width:100%;height:11px;display:flex;justify-content:center;align-items:center;gap:1.6px"><svg style="width:9.66px;height:8.91px;flex:none;" viewBox="64 -1408 1664 1536"><path transform="scale(1 -1)" fill="#455a64" d="M1088 704C1088 669 1059 640 1024 640H768C733 640 704 669 704 704C704 739 733 768 768 768H1024C1059 768 1088 739 1088 704ZM1664 896C1664 931 1635 960 1600 960H192C157 960 128 931 128 896V-64C128 -99 157 -128 192 -128H1600C1635 -128 1664 -99 1664 -64ZM1728 1344C1728 1379 1699 1408 1664 1408H128C93 1408 64 1379 64 1344V1088C64 1053 93 1024 128 1024H1664C1699 1024 1728 1053 1728 1088Z"/></svg></div><div class="t">Storage</div></div>
<div class="abs bb " style="left:443px"><div style="position:absolute;left:0;top:1.6px;width:100%;height:11px;display:flex;justify-content:center;align-items:center;gap:1.6px"><svg style="width:10.40px;height:8.17px;flex:none;" viewBox="0 -1280 1792 1408"><path transform="scale(1 -1)" fill="#455a64" d="M1664 32C1664 15 1649 0 1632 0H160C143 0 128 15 128 32V800C149 776 172 754 197 734C340 624 484 512 623 396C698 333 791 256 895 256H896H897C1001 256 1094 333 1169 396C1308 512 1452 624 1595 734C1620 754 1643 776 1664 800V32ZM1664 1083C1664 998 1582 887 1517 836C1383 731 1249 625 1116 519C1063 476 967 384 897 384H896H895C825 384 729 476 676 519C543 625 409 731 275 836C185 907 128 1006 128 1120C128 1137 143 1152 160 1152H1632C1670 1152 1664 1108 1664 1083ZM1792 1120C1792 1208 1720 1280 1632 1280H160C72 1280 0 1208 0 1120V32C0 -56 72 -128 160 -128H1632C1720 -128 1792 -56 1792 32Z"/></svg></div><div class="t">Follow-ups</div></div>
<div class="abs bb " style="left:491px"><div style="position:absolute;left:0;top:1.6px;width:100%;height:11px;display:flex;justify-content:center;align-items:center;gap:1.6px"><svg style="width:8.91px;height:8.91px;flex:none;" viewBox="0 -1408 1536 1536"><path transform="scale(1 -1)" fill="#455a64" d="M1536 640C1536 1063 1191 1408 768 1408C571 1408 380 1329 239 1196L109 1325C91 1344 63 1349 40 1339C16 1329 0 1306 0 1280V832C0 797 29 768 64 768H512C538 768 561 784 571 808C581 831 576 859 557 877L420 1015C513 1102 637 1152 768 1152C1050 1152 1280 922 1280 640C1280 358 1050 128 768 128C609 128 462 200 364 327C359 334 350 338 341 339C332 339 323 336 316 330L179 192C168 181 167 162 177 149C323 -27 539 -128 768 -128C1191 -128 1536 217 1536 640Z"/></svg></div><div class="t">Returns</div></div>
<div class="abs bb r" style="left:539px"><div style="position:absolute;left:0;top:1.6px;width:100%;height:11px;display:flex;justify-content:center;align-items:center;gap:1.6px"><svg style="width:11.14px;height:7.43px;flex:none;" viewBox="0 -1280 1920 1280"><path transform="scale(1 -1)" fill="#fff" d="M768 384V480H896V768H894C878 743 863 732 839 711L762 791L910 928H1024V480H1152V384ZM1280 640C1280 822 1170 1056 960 1056C750 1056 640 822 640 640C640 458 750 224 960 224C1170 224 1280 458 1280 640ZM1792 384C1651 384 1536 269 1536 128H384C384 269 269 384 128 384V896C269 896 384 1011 384 1152H1536C1536 1011 1651 896 1792 896V384ZM1920 1216C1920 1251 1891 1280 1856 1280H64C29 1280 0 1251 0 1216V64C0 29 29 0 64 0H1856C1891 0 1920 29 1920 64Z"/></svg></div><div class="t">Receivables</div></div>
<div class="abs bb " style="left:587px"><div style="position:absolute;left:0;top:1.6px;width:100%;height:11px;display:flex;justify-content:center;align-items:center;gap:1.6px"><svg style="width:10.40px;height:8.17px;flex:none;" viewBox="0 -1408 1792 1408"><path transform="scale(1 -1)" fill="#455a64" d="M256 224C256 241 241 256 224 256H32C15 256 0 241 0 224V32C0 15 15 0 32 0H224C241 0 256 15 256 32ZM256 608C256 625 241 640 224 640H32C15 640 0 625 0 608V416C0 399 15 384 32 384H224C241 384 256 399 256 416ZM256 992C256 1009 241 1024 224 1024H32C15 1024 0 1009 0 992V800C0 783 15 768 32 768H224C241 768 256 783 256 800ZM1792 224C1792 241 1777 256 1760 256H416C399 256 384 241 384 224V32C384 15 399 0 416 0H1760C1777 0 1792 15 1792 32ZM256 1376C256 1393 241 1408 224 1408H32C15 1408 0 1393 0 1376V1184C0 1167 15 1152 32 1152H224C241 1152 256 1167 256 1184ZM1792 608C1792 625 1777 640 1760 640H416C399 640 384 625 384 608V416C384 399 399 384 416 384H1760C1777 384 1792 399 1792 416ZM1792 992C1792 1009 1777 1024 1760 1024H416C399 1024 384 1009 384 992V800C384 783 399 768 416 768H1760C1777 768 1792 783 1792 800ZM1792 1376C1792 1393 1777 1408 1760 1408H416C399 1408 384 1393 384 1376V1184C384 1167 399 1152 416 1152H1760C1777 1152 1792 1167 1792 1184Z"/></svg></div><div class="t">History</div></div>
<div class="abs bb " style="left:635px"><div style="position:absolute;left:0;top:1.6px;width:100%;height:11px;display:flex;justify-content:center;align-items:center;gap:1.6px"><svg style="width:10.40px;height:10.40px;flex:none;" viewBox="0 -1536 1792 1792"><path transform="scale(1 -1)" fill="#455a64" d="M768 -128V1024H1152V608C1152 555 1195 512 1248 512H1664V-128ZM1024 1312C1024 1295 1009 1280 992 1280H288C271 1280 256 1295 256 1312V1376C256 1393 271 1408 288 1408H992C1009 1408 1024 1393 1024 1376V1312ZM1280 640V939L1579 640ZM1792 512C1792 565 1762 638 1724 676L1316 1084C1305 1095 1293 1104 1280 1112V1440C1280 1493 1237 1536 1184 1536H96C43 1536 0 1493 0 1440V96C0 43 43 0 96 0H640V-160C640 -213 683 -256 736 -256H1696C1749 -256 1792 -213 1792 -160Z"/></svg></div><div class="t">Duplicate</div></div>
<div class="abs bb " style="left:683px"><div style="position:absolute;left:0;top:1.6px;width:100%;height:11px;display:flex;justify-content:center;align-items:center;gap:1.6px"><svg style="width:8.91px;height:8.91px;flex:none;" viewBox="0 -1408 1536 1536"><path transform="scale(1 -1)" fill="#455a64" d="M1511 480C1511 497 1497 512 1479 512H1287C1272 512 1262 503 1257 489C1240 449 1228 411 1204 372C1111 220 946 128 768 128C639 128 514 178 420 266L557 403C569 415 576 431 576 448C576 483 547 512 512 512H64C29 512 0 483 0 448V0C0 -35 29 -64 64 -64C81 -64 97 -57 109 -45L238 84C380 -51 569 -128 764 -128C1133 -128 1425 119 1510 473C1511 475 1511 478 1511 480ZM1536 1280C1536 1315 1507 1344 1472 1344C1455 1344 1439 1337 1427 1325L1297 1196C1155 1330 964 1408 768 1408C399 1408 104 1162 18 807C18 805 18 802 18 800C18 783 32 768 50 768H249C264 768 274 777 279 791C296 831 308 869 332 908C425 1060 590 1152 768 1152C897 1152 1022 1103 1117 1015L979 877C967 865 960 849 960 832C960 797 989 768 1024 768H1472C1507 768 1536 797 1536 832Z"/></svg></div><div class="t">Reverse</div></div>
<div class="abs bb " style="left:731px"><div style="position:absolute;left:0;top:1.6px;width:100%;height:11px;display:flex;justify-content:center;align-items:center;gap:1.6px"><svg style="width:9.66px;height:8.17px;flex:none;" viewBox="0 -1280 1664 1408"><path transform="scale(1 -1)" fill="#455a64" d="M640 0C640 70 582 128 512 128C442 128 384 70 384 0C384 -70 442 -128 512 -128C582 -128 640 -70 640 0ZM1536 0C1536 70 1478 128 1408 128C1338 128 1280 70 1280 0C1280 -70 1338 -128 1408 -128C1478 -128 1536 -70 1536 0ZM1664 1088C1664 1123 1635 1152 1600 1152H399C389 1200 387 1280 320 1280H64C29 1280 0 1251 0 1216C0 1181 29 1152 64 1152H268L445 329C429 298 384 223 384 192C384 157 413 128 448 128H1472C1507 128 1536 157 1536 192C1536 227 1507 256 1472 256H552C562 276 576 297 576 320C576 344 568 367 563 390L1607 512C1639 516 1664 544 1664 576Z"/></svg></div><div class="t">Shop</div></div>
<div class="abs bb " style="left:779px"><div style="position:absolute;left:0;top:1.6px;width:100%;height:11px;display:flex;justify-content:center;align-items:center;gap:1.6px"><span style="font-size:10.5px;line-height:11px;font-weight:bold;color:#455a64">?</span></div><div class="t">Help</div></div>
<div class="abs bb " style="left:827px"><div style="position:absolute;left:0;top:1.6px;width:100%;height:11px;display:flex;justify-content:center;align-items:center;gap:1.6px"><svg style="width:10.03px;height:8.17px;flex:none;transform:scaleX(-1);" viewBox="64 -1280 1728 1408"><path transform="scale(1 -1)" fill="#455a64" d="M640 128C640 58 582 0 512 0C442 0 384 58 384 128C384 198 442 256 512 256C582 256 640 198 640 128ZM256 640V670C256 674 262 689 265 692L460 887C463 890 478 896 482 896H640V640ZM1536 128C1536 58 1478 0 1408 0C1338 0 1280 58 1280 128C1280 198 1338 256 1408 256C1478 256 1536 198 1536 128ZM1792 1216C1792 1251 1763 1280 1728 1280H704C669 1280 640 1251 640 1216V1024H480C444 1024 396 1004 371 979L173 781C118 726 128 647 128 576V256C93 256 64 227 64 192C64 118 142 128 192 128H256C256 -13 371 -128 512 -128C653 -128 768 -13 768 128H1152C1152 -13 1267 -128 1408 -128C1549 -128 1664 -13 1664 128C1714 128 1792 118 1792 192Z"/></svg></div><div class="t">Delivery</div></div>
<div class="abs bb g" style="left:875px"><div style="position:absolute;left:0;top:1.6px;width:100%;height:11px;display:flex;justify-content:center;align-items:center;gap:1.6px"><span style="font-size:10px;line-height:11px;font-weight:bold;letter-spacing:-.5px;color:#fff">F11</span><svg style="width:9.52px;height:9.54px;flex:none;" viewBox="21 -1408 1641 1643"><path transform="scale(1 -1)" fill="#fff" d="M384 64C384 29 355 0 320 0C285 0 256 29 256 64C256 99 285 128 320 128C355 128 384 99 384 64ZM1028 484C897 536 792 641 740 772L59 91C35 67 21 34 21 0C21 -34 35 -67 59 -90L165 -198C189 -221 222 -235 256 -235C290 -235 323 -221 346 -198L1028 484ZM1662 919C1662 939 1650 954 1630 954C1610 954 1378 808 1345 789L1152 896V1120L1445 1289C1454 1295 1461 1306 1461 1317C1461 1329 1455 1338 1445 1345C1384 1386 1289 1408 1216 1408C969 1408 768 1207 768 960C768 713 969 512 1216 512C1405 512 1576 635 1639 813C1650 845 1662 886 1662 919Z"/></svg></div><div class="t">+ Work order</div></div>
<div class="abs bb g" style="left:923px"><div style="position:absolute;left:0;top:1.6px;width:100%;height:11px;display:flex;justify-content:center;align-items:center;gap:1.6px"><svg style="width:10.35px;height:8.17px;flex:none;" viewBox="0 -1408 1784 1408"><path transform="scale(1 -1)" fill="#fff" d="M888 352H832V448H736V504L852 620L1004 468ZM1328 1072C1337 1063 1336 1048 1327 1039L977 689C968 680 953 679 944 688C935 697 936 712 945 721L1295 1071C1304 1080 1319 1081 1328 1072ZM1408 478C1408 491 1400 502 1388 507C1376 512 1363 510 1353 500L1289 436C1283 430 1280 422 1280 414V288C1280 200 1208 128 1120 128H288C200 128 128 200 128 288V1120C128 1208 200 1280 288 1280H1120C1135 1280 1150 1278 1165 1274C1176 1270 1188 1273 1197 1282L1246 1331C1254 1339 1257 1349 1255 1360C1253 1370 1246 1379 1237 1383C1200 1400 1160 1408 1120 1408H288C129 1408 0 1279 0 1120V288C0 129 129 0 288 0H1120C1279 0 1408 129 1408 288ZM1312 1216 640 544V256H928L1600 928ZM1756 1084C1793 1121 1793 1183 1756 1220L1604 1372C1567 1409 1505 1409 1468 1372L1376 1280L1664 992L1756 1084Z"/></svg></div><div class="t">+ Estimate</div></div>
<div class="abs bb g" style="left:971px"><div style="position:absolute;left:0;top:1.6px;width:100%;height:11px;display:flex;justify-content:center;align-items:center;gap:1.6px"><span style="font-size:10px;line-height:11px;font-weight:bold;letter-spacing:-.5px;color:#fff">F4</span><svg style="width:9.65px;height:8.17px;flex:none;" viewBox="0 -1408 1663 1408"><path transform="scale(1 -1)" fill="#fff" d="M1408 606C1408 619 1400 630 1388 635C1384 637 1380 638 1376 638C1368 638 1360 635 1353 628L1289 564C1283 558 1280 550 1280 542V288C1280 200 1208 128 1120 128H288C200 128 128 200 128 288V1120C128 1208 200 1280 288 1280H1120C1135 1280 1150 1278 1165 1274C1168 1273 1171 1272 1174 1272C1182 1272 1191 1276 1197 1282L1246 1331C1254 1339 1257 1349 1255 1360C1253 1370 1246 1379 1237 1383C1200 1400 1160 1408 1120 1408H288C129 1408 0 1279 0 1120V288C0 129 129 0 288 0H1120C1279 0 1408 129 1408 288ZM1639 1095C1671 1127 1671 1177 1639 1209L1529 1319C1497 1351 1447 1351 1415 1319L768 672L505 935C473 967 423 967 391 935L281 825C249 793 249 743 281 711L711 281C743 249 793 249 825 281L1639 1095Z"/></svg></div><div class="t">Payment</div></div>
</div>
<div id="print" class="abs"><div id="page" class="abs"><svg class="abs" style="left:20px;top:24px;width:78px;height:31px" viewBox="0 0 780 310">
<path d="M103 118 L103 82 C150 50 230 20 310 11 C370 6 420 18 482 38 C560 60 640 83 690 103 C718 116 728 130 722 145 L640 140 C670 132 660 120 630 112 C590 100 540 88 482 72 C420 54 370 45 310 50 C240 58 175 84 130 106 L126 118 Z" fill="#111"/>
<path d="M312 104 L336 136 L500 146 L470 134 L345 128 L330 108 Z" fill="#222"/>
<path d="M340 112 L480 132 L440 118 Z" fill="#333"/>
<path d="M150 118 C160 82 230 80 246 114" fill="none" stroke="#444" stroke-width="7"/>
<path d="M640 110 L700 118 L712 132 L660 128Z" fill="#222"/>
<path d="M40 169 L766 169 L756 186 L30 186Z" fill="#111"/>
<rect x="8" y="270" width="126" height="26" fill="#2aa9e0"/><rect x="630" y="270" width="126" height="26" fill="#2aa9e0"/>
</svg>
<div class="abs" style="top:43.92px;font-size:6.3px;line-height:7.56px;color:#111;white-space:nowrap;font-weight:bold;left:-41.40px;width:200px;text-align:center;-webkit-text-stroke:.25px #111;"><span class="sx" style="transform:scaleX(1.38);transform-origin:50% 50%">MÉCANIQUE ABC</span></div>
<div class="abs" style="top:50.72px;font-size:3.3px;line-height:3.96px;color:#333;white-space:nowrap;left:-41.20px;width:200px;text-align:center;"><span class="sx" style="transform:scaleX(1.1);transform-origin:50% 50%">RÉPARATION AUTOMOBILE</span></div>
<div class="abs" style="top:23.74px;font-size:7.6px;line-height:9.12px;color:#111;white-space:nowrap;font-weight:bold;left:84.80px;width:200px;text-align:center;"><span class="sx" style="transform:scaleX(1.02);transform-origin:50% 50%">V2V Technologies</span></div>
<div class="abs" style="top:32.94px;font-size:6.1px;line-height:7.32px;color:#222;white-space:nowrap;left:84.80px;width:200px;text-align:center;">5815 de lorimier</div>
<div class="abs" style="top:40.84px;font-size:6.1px;line-height:7.32px;color:#222;white-space:nowrap;left:84.80px;width:200px;text-align:center;">Montreal, QC h2g2n8</div>
<div class="abs" style="top:56.14px;font-size:6.1px;line-height:7.32px;color:#222;white-space:nowrap;left:84.80px;width:200px;text-align:center;">mbrunel@v2v.ca</div>
<div class="abs" style="left:245.30px;top:24.30px;width:95.30px;height:7.90px;background:#a8d3e6;"></div>
<div class="abs" style="top:24.76px;font-size:5.9px;line-height:7.08px;color:#111;white-space:nowrap;font-weight:bold;left:193.00px;width:200px;text-align:center;">SOUMISSION</div>
<div class="abs" style="left:246.00px;top:33.60px;width:93.90px;height:30.30px;border:.7px solid #484848;border-radius:3.5px;"></div>
<div class="abs" style="left:247.30px;top:36.40px;width:91.80px;height:24.90px;border:.7px solid #484848;"></div>
<div class="abs" style="left:247.80px;top:36.90px;width:44.50px;height:23.90px;background:#a8d3e6;"></div>
<div class="abs" style="left:292.10px;top:36.40px;width:0.70px;height:24.90px;background:#484848;"></div>
<div class="abs" style="left:247.30px;top:44.70px;width:91.80px;height:0.70px;background:#484848;"></div>
<div class="abs" style="left:247.30px;top:52.80px;width:91.80px;height:0.70px;background:#484848;"></div>
<div class="abs" style="top:37.74px;font-size:5.1px;line-height:6.12px;color:#222;white-space:nowrap;left:170.00px;width:200px;text-align:center;">Soumission #</div>
<div class="abs" style="top:46.04px;font-size:5.1px;line-height:6.12px;color:#222;white-space:nowrap;left:170.00px;width:200px;text-align:center;"># P.O.</div>
<div class="abs" style="top:54.24px;font-size:5.1px;line-height:6.12px;color:#222;white-space:nowrap;left:170.00px;width:200px;text-align:center;">Date</div>
<div class="abs" style="top:37.74px;font-size:5.1px;line-height:6.12px;color:#222;white-space:nowrap;left:215.70px;width:200px;text-align:center;">1127</div>
<div class="abs" style="top:54.24px;font-size:5.1px;line-height:6.12px;color:#222;white-space:nowrap;left:215.70px;width:200px;text-align:center;">2023-08-30</div>
<div class="abs" style="top:71.06px;font-size:5.4px;line-height:6.48px;color:#222;white-space:nowrap;left:19.30px;">Créé le :2023-08-30 &nbsp; Par : CORNER GARAGE 15</div>
<div class="abs" style="left:19.30px;top:77.90px;width:322.10px;height:54.30px;border:.7px solid #484848;border-radius:4px;"></div>
<div class="abs" style="left:180.00px;top:77.90px;width:0.70px;height:54.30px;background:#484848;"></div>
<div class="abs" style="top:80.12px;font-size:5.3px;line-height:6.36px;color:#111;white-space:nowrap;font-weight:bold;left:22.20px;">Client : JP - JULIE PAYETTE</div>
<div class="abs" style="top:86.32px;font-size:5.3px;line-height:6.36px;color:#222;white-space:nowrap;left:22.20px;">5815 de lorimier</div>
<div class="abs" style="top:92.52px;font-size:5.3px;line-height:6.36px;color:#222;white-space:nowrap;left:22.20px;">Montreal, QC H2G 2N8</div>
<div class="abs" style="top:99.02px;font-size:5.3px;line-height:6.36px;color:#222;white-space:nowrap;left:22.20px;">mbrunel+100@v2v.ca / 514-892-5149</div>
<div class="abs" style="top:80.18px;font-size:5.2px;line-height:6.24px;color:#111;white-space:nowrap;font-weight:bold;left:183.00px;">Véhicule</div>
<div class="abs" style="top:86.78px;font-size:5.2px;line-height:6.24px;color:#222;white-space:nowrap;left:183.00px;">Marque :</div>
<div class="abs" style="top:86.78px;font-size:5.2px;line-height:6.24px;color:#222;white-space:nowrap;left:236.30px;">ACURA</div>
<div class="abs" style="top:93.98px;font-size:5.2px;line-height:6.24px;color:#222;white-space:nowrap;left:183.00px;">Modèle :</div>
<div class="abs" style="top:93.98px;font-size:5.2px;line-height:6.24px;color:#222;white-space:nowrap;left:236.30px;">RLX</div>
<div class="abs" style="top:101.18px;font-size:5.2px;line-height:6.24px;color:#222;white-space:nowrap;left:183.00px;">Année :</div>
<div class="abs" style="top:101.18px;font-size:5.2px;line-height:6.24px;color:#222;white-space:nowrap;left:236.30px;">2014</div>
<div class="abs" style="top:108.48px;font-size:5.2px;line-height:6.24px;color:#222;white-space:nowrap;left:183.00px;">N° de série :</div>
<div class="abs" style="top:115.38px;font-size:5.2px;line-height:6.24px;color:#222;white-space:nowrap;left:183.00px;">Immatriculation :</div>
<div class="abs" style="top:122.58px;font-size:5.2px;line-height:6.24px;color:#222;white-space:nowrap;left:183.00px;">Couleur :</div>
<div class="abs" style="top:108.48px;font-size:5.2px;line-height:6.24px;color:#222;white-space:nowrap;left:262.00px;">Odomètre sortie :</div>
<div class="abs" style="top:108.48px;font-size:5.2px;line-height:6.24px;color:#222;white-space:nowrap;left:317.00px;">15500</div>
<div class="abs" style="top:115.38px;font-size:5.2px;line-height:6.24px;color:#222;white-space:nowrap;left:262.00px;">Cylindrée :</div>
<div class="abs" style="top:115.38px;font-size:5.2px;line-height:6.24px;color:#222;white-space:nowrap;left:317.00px;">14</div>
<div class="abs" style="top:122.58px;font-size:5.2px;line-height:6.24px;color:#222;white-space:nowrap;left:262.00px;">Moteur :</div>
<div class="abs" style="left:19.30px;top:140.40px;width:322.10px;height:238.60px;border:.7px solid #484848;border-radius:4px;"></div>
<div class="abs" style="left:19.70px;top:145.60px;width:321.30px;height:8.50px;background:#a8d3e6;border-top:.7px solid #333;border-bottom:.7px solid #333;"></div>
<div class="abs" style="left:178.20px;top:154.00px;width:0.70px;height:84.50px;background:#484848;"></div>
<div class="abs" style="left:222.20px;top:154.00px;width:0.70px;height:75.60px;background:#484848;"></div>
<div class="abs" style="left:262.00px;top:154.00px;width:0.70px;height:75.60px;background:#484848;"></div>
<div class="abs" style="left:301.00px;top:154.00px;width:0.70px;height:75.60px;background:#484848;"></div>
<div class="abs" style="left:178.60px;top:229.30px;width:162.40px;height:0.70px;background:#484848;"></div>
<div class="abs" style="left:19.70px;top:238.20px;width:321.30px;height:0.70px;background:#484848;"></div>
<div class="abs" style="top:146.28px;font-size:5.2px;line-height:6.24px;color:#111;white-space:nowrap;font-weight:bold;left:-1.00px;width:200px;text-align:center;">Description</div>
<div class="abs" style="top:146.28px;font-size:5.2px;line-height:6.24px;color:#111;white-space:nowrap;font-weight:bold;left:100.50px;width:200px;text-align:center;">Quantité</div>
<div class="abs" style="top:146.28px;font-size:5.2px;line-height:6.24px;color:#111;white-space:nowrap;font-weight:bold;left:142.30px;width:200px;text-align:center;">Prix</div>
<div class="abs" style="top:146.28px;font-size:5.2px;line-height:6.24px;color:#111;white-space:nowrap;font-weight:bold;left:181.70px;width:200px;text-align:center;">Parts</div>
<div class="abs" style="top:146.28px;font-size:5.2px;line-height:6.24px;color:#111;white-space:nowrap;font-weight:bold;left:221.00px;width:200px;text-align:center;">Service(s)</div>
<div class="abs" style="top:155.82px;font-size:5.3px;line-height:6.36px;color:#111;white-space:nowrap;font-weight:bold;left:21.50px;">REMPLACER - ()</div>
<div class="abs" style="top:155.76px;font-size:5.4px;line-height:6.48px;color:#222;white-space:nowrap;left:100.50px;width:200px;text-align:center;">1.00</div>
<div class="abs" style="top:155.76px;font-size:5.4px;line-height:6.48px;color:#222;white-space:nowrap;right:101.00px;text-align:right;">110.00</div>
<div class="abs" style="top:155.76px;font-size:5.4px;line-height:6.48px;color:#222;white-space:nowrap;right:21.60px;text-align:right;">110.00</div>
<div class="abs" style="top:179.92px;font-size:5.3px;line-height:6.36px;color:#111;white-space:nowrap;font-weight:bold;left:21.50px;">MOD- GUIDE DE TEMPS STD. - ()</div>
<div class="abs" style="top:179.86px;font-size:5.4px;line-height:6.48px;color:#222;white-space:nowrap;left:100.50px;width:200px;text-align:center;">1.00</div>
<div class="abs" style="top:179.86px;font-size:5.4px;line-height:6.48px;color:#222;white-space:nowrap;right:101.00px;text-align:right;">110.00</div>
<div class="abs" style="top:179.86px;font-size:5.4px;line-height:6.48px;color:#222;white-space:nowrap;right:21.60px;text-align:right;">110.00</div>
<div class="abs" style="top:203.72px;font-size:5.3px;line-height:6.36px;color:#111;white-space:nowrap;font-weight:bold;left:21.50px;">PLAINTE : - ()</div>
<div class="abs" style="top:203.66px;font-size:5.4px;line-height:6.48px;color:#222;white-space:nowrap;left:100.50px;width:200px;text-align:center;">1.00</div>
<div class="abs" style="top:203.66px;font-size:5.4px;line-height:6.48px;color:#222;white-space:nowrap;right:101.00px;text-align:right;">0.00</div>
<div class="abs" style="top:203.66px;font-size:5.4px;line-height:6.48px;color:#222;white-space:nowrap;right:21.60px;text-align:right;">0.00</div>
<div class="abs" style="top:166.92px;font-size:5.3px;line-height:6.36px;color:#111;white-space:nowrap;font-weight:bold;right:184.00px;text-align:right;">Sous-Total</div>
<div class="abs" style="top:164.12px;font-size:5.3px;line-height:6.36px;color:#111;white-space:nowrap;font-weight:bold;right:61.40px;text-align:right;">0.00</div>
<div class="abs" style="top:164.12px;font-size:5.3px;line-height:6.36px;color:#111;white-space:nowrap;font-weight:bold;right:21.60px;text-align:right;">110.00</div>
<div class="abs" style="top:191.12px;font-size:5.3px;line-height:6.36px;color:#111;white-space:nowrap;font-weight:bold;right:184.00px;text-align:right;">Sous-Total</div>
<div class="abs" style="top:188.32px;font-size:5.3px;line-height:6.36px;color:#111;white-space:nowrap;font-weight:bold;right:61.40px;text-align:right;">0.00</div>
<div class="abs" style="top:188.32px;font-size:5.3px;line-height:6.36px;color:#111;white-space:nowrap;font-weight:bold;right:21.60px;text-align:right;">110.00</div>
<div class="abs" style="top:230.80px;font-size:5px;line-height:6.00px;color:#222;white-space:nowrap;font-style:italic;left:160.00px;width:200px;text-align:center;">* part(s) to order</div>
<div class="abs" style="left:19.70px;top:238.90px;width:158.90px;height:7.00px;background:#a8d3e6;"></div>
<div class="abs" style="top:239.18px;font-size:5.2px;line-height:6.24px;color:#111;white-space:nowrap;font-weight:bold;left:-1.00px;width:200px;text-align:center;">Garantie légal</div>
<div class="abs" style="left:179.30px;top:238.90px;width:161.70px;height:73.10px;background:#a8d3e6;"></div>
<div class="abs" style="left:19.70px;top:312.00px;width:321.30px;height:0.70px;background:#484848;"></div>
<div class="abs" style="top:257.93px;font-size:3.95px;line-height:4.74px;color:#222;white-space:nowrap;left:-1.00px;width:200px;text-align:center;">PAR LA LOI TOUTE RÉPARATION EST GARANTIE PIÈCE(S) ET MAIN D'OEUVRE</div>
<div class="abs" style="top:262.98px;font-size:3.95px;line-height:4.74px;color:#222;white-space:nowrap;left:-1.00px;width:200px;text-align:center;">POUR TROIS (3) MOIS OU 5000 KM</div>
<div class="abs" style="top:268.03px;font-size:3.95px;line-height:4.74px;color:#222;white-space:nowrap;left:-1.00px;width:200px;text-align:center;">SELON LE PREMIER TERME ATTEINT, À L'EXCEPTION DES DOMMAGES</div>
<div class="abs" style="top:273.08px;font-size:3.95px;line-height:4.74px;color:#222;white-space:nowrap;left:-1.00px;width:200px;text-align:center;">OCCASIONNÉS PAR L'USAGE ABUSIF.</div>
<div class="abs" style="top:282.76px;font-size:5.4px;line-height:6.48px;color:#222;white-space:nowrap;left:-0.50px;width:200px;text-align:center;">Un frais de 10% sera ajouté après le terme de 30 jours</div>
<div class="abs" style="left:19.70px;top:296.00px;width:158.90px;height:7.10px;background:#a8d3e6;"></div>
<div class="abs" style="left:19.70px;top:295.40px;width:158.90px;height:0.70px;background:#484848;"></div>
<div class="abs" style="top:296.38px;font-size:5.2px;line-height:6.24px;color:#111;white-space:nowrap;font-weight:bold;left:-1.00px;width:200px;text-align:center;">Paiements</div>
<div class="abs" style="top:239.48px;font-size:5.2px;line-height:6.24px;color:#222;white-space:nowrap;left:180.70px;">Sous-Total Service(s)</div>
<div class="abs" style="top:239.48px;font-size:5.2px;line-height:6.24px;color:#222;white-space:nowrap;right:21.70px;text-align:right;">220.00 CAD</div>
<div class="abs" style="top:245.78px;font-size:5.2px;line-height:6.24px;color:#222;white-space:nowrap;left:180.70px;">Sous-Total Parts</div>
<div class="abs" style="top:245.78px;font-size:5.2px;line-height:6.24px;color:#222;white-space:nowrap;right:21.70px;text-align:right;">0.00 CAD</div>
<div class="abs" style="top:252.48px;font-size:5.2px;line-height:6.24px;color:#222;white-space:nowrap;left:180.70px;">Sous-Total</div>
<div class="abs" style="top:252.48px;font-size:5.2px;line-height:6.24px;color:#222;white-space:nowrap;right:21.70px;text-align:right;">220.00 CAD</div>
<div class="abs" style="top:264.28px;font-size:5.2px;line-height:6.24px;color:#222;white-space:nowrap;left:180.70px;">TPS (5%) &nbsp; &nbsp; RT001 434324324</div>
<div class="abs" style="top:264.28px;font-size:5.2px;line-height:6.24px;color:#222;white-space:nowrap;right:21.70px;text-align:right;">11.00 CAD</div>
<div class="abs" style="top:270.68px;font-size:5.2px;line-height:6.24px;color:#222;white-space:nowrap;left:180.70px;">TVQ (9.975%) &nbsp; 76474577457</div>
<div class="abs" style="top:270.68px;font-size:5.2px;line-height:6.24px;color:#222;white-space:nowrap;right:21.70px;text-align:right;">21.95 CAD</div>
<div class="abs" style="top:283.68px;font-size:5.2px;line-height:6.24px;color:#222;white-space:nowrap;left:180.70px;">Total</div>
<div class="abs" style="top:283.20px;font-size:6px;line-height:7.20px;color:#111;white-space:nowrap;font-weight:bold;right:21.70px;text-align:right;">252.95 CAD</div>
<div class="abs" style="left:23.7px;top:317.1px;width:1236px;font-size:12.2px;line-height:14.48px;color:#111;font-weight:bold;transform:scale(.25);transform-origin:0 0;-webkit-text-stroke:.75px #111"><div style="white-space:nowrap;text-align:justify;text-align-last:justify;overflow:hidden;height:14.48px">VENTE : Payable sur réception de l'état de compte. Des frais d'administration seront calculés au taux de 2% par mois (24% par année) et chargés sur tout compte impayé et passé dû. La marchandise vendue</div><div style="white-space:nowrap;text-align:justify;text-align-last:justify;overflow:hidden;height:14.48px">demeure la propriété du vendeur jusqu'au paiement complet. La signature reconnaît avoir pris connaissance des conditions ci-dessus et déclare les accepter. Je vous autorise à transmettre à CAA, CARFAX</div><div style="white-space:nowrap;text-align:justify;text-align-last:justify;overflow:hidden;height:14.48px">et autres partenaires stratégiques mes coordonnées ainsi que les détails relatifs à la présente visite. J'autorise par les présentes, l'ouverture et la constitution d'un dossier d'entretien et de réparation et</div><div style="white-space:nowrap;text-align:justify;text-align-last:justify;overflow:hidden;height:14.48px">j'autorise également l'atelier mécanique et ses employés à accomplir, détenir et communiquer à tout tiers tout renseignement personnel au sujet qui sera nécessaire à l'accomplissement du dossier. J'autorise</div><div style="white-space:nowrap;text-align:justify;text-align-last:justify;overflow:hidden;height:14.48px">de plus l'atelier de mécanique et ses employés à utiliser lesdits renseignements à des fins de commercialisation. J'autorise également par les présentes l'exécution des travaux de réparation spécifiés sur ce</div><div style="white-space:nowrap;text-align:justify;text-align-last:justify;overflow:hidden;height:14.48px">document et l'emploi des pièces et matériaux requis à cette fin. Je vous dégage de toute responsabilité quant aux pertes ou dommage se rapportant au véhicule ou aux objets laissés dans le véhicule en cas</div><div style="white-space:nowrap;text-align:justify;text-align-last:justify;overflow:hidden;height:14.48px">d'incendie, de vol ou de toute autre cause indépendante de votre volonté dans les limites prévues par la loi, et quant à tout délai résultant de l'indisponibilité de pièces ou quant à tout retard dans leur expédition par le</div><div style="white-space:nowrap;text-align:justify;text-align-last:justify;overflow:hidden;height:14.48px">fournisseur ou le routeur. Je vous autorise, ainsi qu'à vos employés, à utiliser le véhicule décrit aux présentes dans les rues, sur les routes ou ailleurs aux fins de vérification ou d'inspection.</div><div style="white-space:nowrap;height:14.48px">Toutes les pièces installées sont neuves à moins d'indication contraire. (U) : usagée (R) : reconditionnée.</div></div>
<div class="abs" style="left:19.70px;top:350.70px;width:321.30px;height:0.70px;background:#484848;"></div>
<div class="abs" style="left:19.70px;top:373.40px;width:321.30px;height:0.70px;background:#484848;"></div>
<div class="abs" style="top:364.36px;font-size:5.4px;line-height:6.48px;color:#222;white-space:nowrap;left:22.50px;">Date :</div>
<div class="abs" style="top:362.60px;font-size:7px;line-height:8.40px;color:#111;white-space:nowrap;font-weight:bold;left:-16.00px;width:200px;text-align:center;">2023-08-30</div>
<div class="abs" style="left:54.00px;top:370.70px;width:59.60px;height:0.60px;background:#484848;"></div>
<div class="abs" style="top:364.36px;font-size:5.4px;line-height:6.48px;color:#222;white-space:nowrap;left:118.40px;">Signature :</div>
<div class="abs" style="left:182.30px;top:370.70px;width:156.00px;height:0.60px;background:#484848;"></div>
</div><div id="ppanel" class="abs">
<div class="abs" style="left:13.5px;top:10.5px;font-size:9.3px;line-height:11px">Print</div>
<div class="abs" style="right:14px;top:11px;font-size:7.3px;line-height:10px;-webkit-text-stroke:.25px #e8eaed">1 page</div>
<div class="abs pl" style="top:41.5px">Destination</div>
<div class="abs sel" style="top:38px;padding-left:17px"><span class="sx" style="transform:scaleX(.88);vertical-align:top">Save as PDF</span><svg class="abs" style="left:5.5px;top:4.5px;width:6.5px;height:8px" viewBox="0 0 13 16"><path d="M0 0h8v5h5v11H0z M9 0l4 4H9z" fill="#dadce0"/></svg></div>
<div class="abs pl" style="top:71.6px">Pages</div>
<div class="abs sel" style="top:67.5px">All</div>
<div class="abs pl" style="top:100.5px"><span class="sx" style="transform:scaleX(.93)">Pages per sheet</span></div>
<div class="abs sel" style="top:97px">1</div>
<div class="abs" style="left:120.5px;top:443.5px;width:37px;height:18px;background:#8ab4f8;border-radius:2px;color:#202124;text-align:center;line-height:18px;font-size:7.3px;-webkit-text-stroke:.15px #202124">Save</div>
<div class="abs" style="left:161.5px;top:443.5px;width:40px;height:18px;border:1px solid #4c4e52;border-radius:2px;color:#8ab4f8;text-align:center;line-height:16px;font-size:7.3px;-webkit-text-stroke:.15px #8ab4f8">Cancel</div>
</div></div>
<div id="title" class="abs"><span class="tl" style="left:414.21px;top:6.51px;font-size:52.33px;line-height:52.33px;transform:scaleX(0.596);text-shadow:2.60px 0 0 #fff,5.19px 0 0 #fff">E</span><span class="tl" style="left:439.57px;top:6.51px;font-size:52.33px;line-height:52.33px;transform:scaleX(0.630);text-shadow:2.24px 0 0 #fff,4.48px 0 0 #fff">S</span><span class="tl" style="left:466.34px;top:6.51px;font-size:52.33px;line-height:52.33px;transform:scaleX(0.670);text-shadow:1.86px 0 0 #fff,3.72px 0 0 #fff">T</span><span class="tl" style="left:490.08px;top:6.51px;font-size:52.33px;line-height:52.33px;transform:scaleX(0.972)">I</span><span class="tl" style="left:499.72px;top:6.51px;font-size:52.33px;line-height:52.33px;transform:scaleX(1.195)">M</span><span class="tl" style="left:549.19px;top:6.51px;font-size:52.33px;line-height:52.33px;transform:scaleX(1.011)">A</span><span class="tl" style="left:586.44px;top:6.51px;font-size:52.33px;line-height:52.33px;transform:scaleX(0.678);text-shadow:1.79px 0 0 #fff,3.58px 0 0 #fff">T</span><span class="tl" style="left:611.18px;top:6.51px;font-size:52.33px;line-height:52.33px;transform:scaleX(0.605);text-shadow:2.50px 0 0 #fff,4.99px 0 0 #fff">E</span></div>
</body></html>
